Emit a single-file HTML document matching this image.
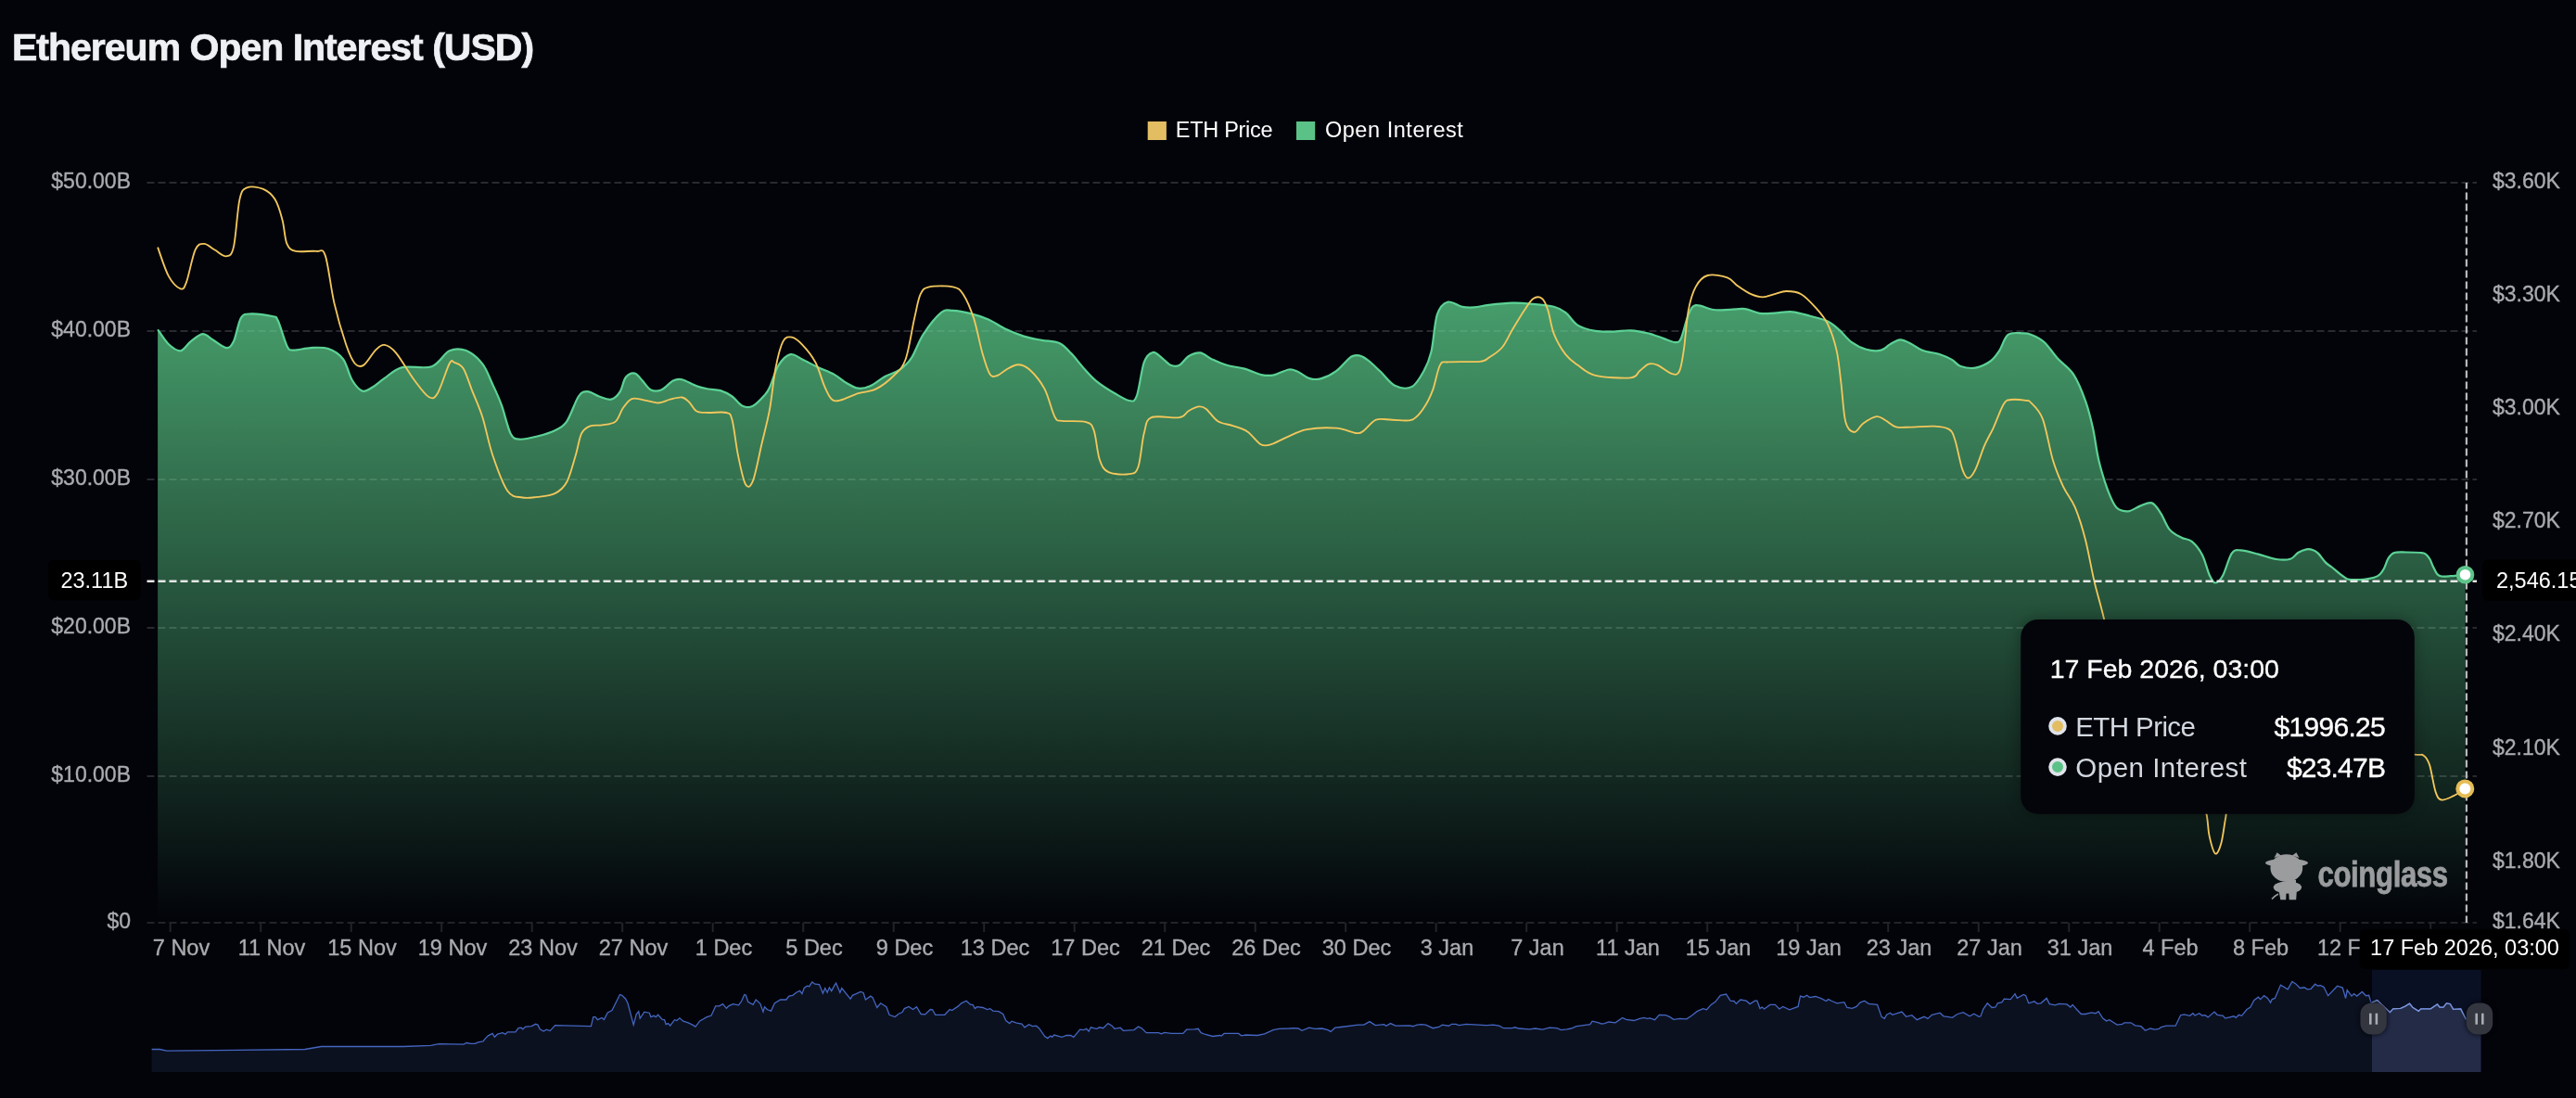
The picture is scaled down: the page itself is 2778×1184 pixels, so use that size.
<!DOCTYPE html>
<html><head><meta charset="utf-8"><style>
html,body{margin:0;padding:0;background:#03040a;}
body{width:2778px;height:1184px;position:relative;overflow:hidden;font-family:'Liberation Sans', sans-serif;}
</style></head><body>
<svg width="2778" height="1184" viewBox="0 0 2778 1184" style="position:absolute;left:0;top:0;will-change:transform"><defs><linearGradient id="g1" x1="0" y1="325" x2="0" y2="995" gradientUnits="userSpaceOnUse"><stop offset="0" stop-color="#58c484" stop-opacity="0.80"/><stop offset="1" stop-color="#58c484" stop-opacity="0.0"/></linearGradient><clipPath id="selclip"><rect x="2558" y="1046" width="117.6" height="110"/></clipPath><filter id="sh" x="-20%" y="-20%" width="140%" height="140%"><feGaussianBlur stdDeviation="8"/></filter><filter id="hs" x="-50%" y="-50%" width="200%" height="200%"><feGaussianBlur stdDeviation="2.5"/></filter></defs><text x="13" y="64.7" font-family="'Liberation Sans', sans-serif" font-weight="700" font-size="41" letter-spacing="-1.0" fill="#eef0f4" stroke="#eef0f4" stroke-width="0.7">Ethereum Open Interest (USD)</text><rect x="1237.7" y="131" width="20.2" height="20" fill="#e2bd62"/><text x="1267.8" y="147.8" font-family="'Liberation Sans', sans-serif" font-size="23.5" letter-spacing="-0.3" fill="#ffffff">ETH Price</text><rect x="1398" y="131" width="20.2" height="20" fill="#5bc287"/><text x="1428.9" y="147.8" font-family="'Liberation Sans', sans-serif" font-size="23.5" letter-spacing="0.55" fill="#ffffff">Open Interest</text><line x1="158.5" y1="994.9" x2="2671" y2="994.9" stroke="#222328" stroke-width="2" stroke-dasharray="8 4"/><line x1="158.5" y1="836.9" x2="2671" y2="836.9" stroke="#222328" stroke-width="2" stroke-dasharray="8 4"/><line x1="158.5" y1="676.9" x2="2671" y2="676.9" stroke="#222328" stroke-width="2" stroke-dasharray="8 4"/><line x1="158.5" y1="516.9" x2="2671" y2="516.9" stroke="#222328" stroke-width="2" stroke-dasharray="8 4"/><line x1="158.5" y1="356.9" x2="2671" y2="356.9" stroke="#222328" stroke-width="2" stroke-dasharray="8 4"/><line x1="158.5" y1="196.9" x2="2671" y2="196.9" stroke="#222328" stroke-width="2" stroke-dasharray="8 4"/><line x1="183.7" y1="995" x2="183.7" y2="1005" stroke="#222327" stroke-width="2"/><line x1="281.2" y1="995" x2="281.2" y2="1005" stroke="#222327" stroke-width="2"/><line x1="378.7" y1="995" x2="378.7" y2="1005" stroke="#222327" stroke-width="2"/><line x1="476.2" y1="995" x2="476.2" y2="1005" stroke="#222327" stroke-width="2"/><line x1="573.7" y1="995" x2="573.7" y2="1005" stroke="#222327" stroke-width="2"/><line x1="671.2" y1="995" x2="671.2" y2="1005" stroke="#222327" stroke-width="2"/><line x1="768.7" y1="995" x2="768.7" y2="1005" stroke="#222327" stroke-width="2"/><line x1="866.2" y1="995" x2="866.2" y2="1005" stroke="#222327" stroke-width="2"/><line x1="963.7" y1="995" x2="963.7" y2="1005" stroke="#222327" stroke-width="2"/><line x1="1061.2" y1="995" x2="1061.2" y2="1005" stroke="#222327" stroke-width="2"/><line x1="1158.7" y1="995" x2="1158.7" y2="1005" stroke="#222327" stroke-width="2"/><line x1="1256.2" y1="995" x2="1256.2" y2="1005" stroke="#222327" stroke-width="2"/><line x1="1353.7" y1="995" x2="1353.7" y2="1005" stroke="#222327" stroke-width="2"/><line x1="1451.2" y1="995" x2="1451.2" y2="1005" stroke="#222327" stroke-width="2"/><line x1="1548.7" y1="995" x2="1548.7" y2="1005" stroke="#222327" stroke-width="2"/><line x1="1646.2" y1="995" x2="1646.2" y2="1005" stroke="#222327" stroke-width="2"/><line x1="1743.7" y1="995" x2="1743.7" y2="1005" stroke="#222327" stroke-width="2"/><line x1="1841.2" y1="995" x2="1841.2" y2="1005" stroke="#222327" stroke-width="2"/><line x1="1938.7" y1="995" x2="1938.7" y2="1005" stroke="#222327" stroke-width="2"/><line x1="2036.2" y1="995" x2="2036.2" y2="1005" stroke="#222327" stroke-width="2"/><line x1="2133.7" y1="995" x2="2133.7" y2="1005" stroke="#222327" stroke-width="2"/><line x1="2231.2" y1="995" x2="2231.2" y2="1005" stroke="#222327" stroke-width="2"/><line x1="2328.7" y1="995" x2="2328.7" y2="1005" stroke="#222327" stroke-width="2"/><line x1="2426.2" y1="995" x2="2426.2" y2="1005" stroke="#222327" stroke-width="2"/><line x1="2523.7" y1="995" x2="2523.7" y2="1005" stroke="#222327" stroke-width="2"/><line x1="2621.2" y1="995" x2="2621.2" y2="1005" stroke="#222327" stroke-width="2"/><path d="M170.1,355.3 C172.1,358.0 177.8,367.5 181.9,371.3 C186.0,375.1 190.6,378.8 194.6,378.3 C198.6,377.8 201.8,371.1 205.8,368.1 C209.8,365.1 214.5,360.4 218.5,360.1 C222.5,359.8 225.4,364.0 229.7,366.5 C233.9,369.0 240.3,374.8 244.0,375.1 C247.7,375.4 249.3,373.5 252.0,368.1 C254.7,362.7 256.8,347.6 260.0,342.6 C263.2,337.7 265.5,338.7 271.1,338.4 C276.7,338.1 288.7,339.8 293.5,341.0 C298.3,342.2 297.2,340.5 299.8,345.8 C302.4,351.1 306.7,367.6 309.4,372.9 C312.1,378.2 311.6,377.2 315.8,377.6 C320.1,378.0 328.5,375.4 334.9,375.1 C341.3,374.8 348.1,374.0 354.0,376.0 C359.9,378.0 365.8,381.6 370.0,387.2 C374.2,392.8 376.1,403.8 379.5,409.5 C382.9,415.2 387.0,420.3 390.7,421.6 C394.4,422.9 397.8,419.8 401.8,417.5 C405.8,415.2 409.3,411.5 414.6,407.9 C419.9,404.3 425.2,398.2 433.7,396.1 C442.2,394.0 457.1,398.2 465.6,395.2 C474.1,392.2 478.5,381.1 484.7,378.3 C490.9,375.5 496.9,375.8 502.8,378.1 C508.7,380.5 515.5,386.3 520.3,392.4 C525.1,398.5 527.9,407.4 531.4,414.8 C534.9,422.2 537.8,428.3 541.0,437.1 C544.2,445.9 547.4,461.3 550.6,467.4 C553.8,473.5 555.3,473.2 560.1,473.7 C564.9,474.2 572.9,472.1 579.3,470.5 C585.7,468.9 593.1,466.8 598.4,464.2 C603.7,461.6 606.9,460.7 611.1,454.6 C615.4,448.5 620.2,432.9 623.9,427.5 C627.6,422.1 629.8,422.1 633.5,422.1 C637.2,422.1 642.0,426.1 646.2,427.5 C650.5,428.9 655.3,431.5 659.0,430.7 C662.7,429.9 665.9,426.7 668.5,422.7 C671.1,418.7 672.2,410.1 674.9,406.8 C677.6,403.5 681.6,402.1 684.5,402.6 C687.4,403.1 689.5,407.0 692.4,410.0 C695.3,413.0 698.5,418.8 702.0,420.5 C705.5,422.2 709.1,422.1 713.1,420.5 C717.1,418.9 722.2,412.5 725.9,410.6 C729.6,408.7 731.2,408.3 735.5,409.3 C739.8,410.3 746.6,414.7 751.4,416.4 C756.2,418.1 759.9,418.7 764.1,419.5 C768.4,420.3 772.6,419.8 776.9,421.1 C781.1,422.4 785.6,424.7 789.6,427.5 C793.6,430.3 797.1,436.0 800.8,437.7 C804.5,439.4 808.0,439.7 812.0,437.7 C816.0,435.7 821.7,429.2 824.7,425.9 C827.7,422.6 827.5,423.1 830.0,417.8 C832.5,412.5 835.9,399.8 839.6,393.9 C843.3,387.9 848.0,383.2 852.3,382.1 C856.5,381.0 860.3,385.3 865.1,387.5 C869.9,389.7 875.2,392.7 881.0,395.5 C886.8,398.3 894.8,401.2 900.1,404.1 C905.4,407.0 908.6,410.6 912.9,413.0 C917.1,415.4 921.4,418.2 925.6,418.7 C929.9,419.2 933.6,418.3 938.4,416.2 C943.2,414.1 949.0,408.9 954.3,406.0 C959.6,403.1 965.5,402.1 970.3,398.7 C975.1,395.3 978.8,392.3 983.0,385.9 C987.2,379.5 990.5,368.5 995.8,360.4 C1001.1,352.3 1009.6,341.4 1014.9,337.1 C1020.2,332.9 1022.3,334.7 1027.6,334.9 C1032.9,335.1 1040.4,336.5 1046.8,338.1 C1053.2,339.7 1059.5,341.7 1065.9,344.5 C1072.3,347.3 1078.6,352.0 1085.0,355.0 C1091.4,358.0 1097.7,360.6 1104.1,362.6 C1110.5,364.6 1116.9,365.6 1123.3,366.8 C1129.7,368.0 1137.1,367.6 1142.4,370.0 C1147.7,372.4 1150.6,376.4 1155.2,381.1 C1159.8,385.9 1165.4,393.5 1170.0,398.5 C1174.6,403.5 1177.5,407.1 1182.8,411.3 C1188.1,415.6 1196.1,420.6 1201.9,424.0 C1207.7,427.4 1213.8,431.5 1217.8,432.0 C1221.8,432.5 1223.1,434.1 1225.8,427.2 C1228.5,420.3 1230.9,398.5 1233.8,390.6 C1236.7,382.7 1240.1,380.8 1243.3,380.0 C1246.5,379.2 1249.7,383.5 1252.9,385.8 C1256.1,388.1 1259.2,392.5 1262.4,393.8 C1265.6,395.1 1268.8,395.4 1272.0,393.8 C1275.2,392.2 1277.9,386.4 1281.6,384.2 C1285.3,382.0 1290.0,379.9 1294.3,380.4 C1298.5,380.9 1302.3,385.2 1307.1,387.4 C1311.9,389.6 1317.2,392.1 1323.0,393.8 C1328.8,395.5 1335.7,395.9 1342.1,397.6 C1348.5,399.4 1356.0,403.2 1361.3,404.3 C1366.6,405.4 1369.2,405.3 1374.0,404.3 C1378.8,403.3 1385.8,399.1 1390.0,398.5 C1394.2,397.9 1395.8,399.2 1399.5,400.8 C1403.2,402.4 1408.0,406.9 1412.3,408.1 C1416.5,409.3 1420.2,409.4 1425.0,408.1 C1429.8,406.8 1435.7,404.0 1441.0,400.1 C1446.3,396.2 1452.7,387.6 1456.9,384.8 C1461.2,382.1 1463.3,382.9 1466.5,383.6 C1469.7,384.3 1472.3,386.1 1476.0,389.0 C1479.7,391.9 1484.0,396.3 1488.8,400.8 C1493.6,405.3 1499.0,413.4 1504.7,416.1 C1510.4,418.8 1517.7,419.6 1522.8,416.9 C1527.9,414.2 1532.0,406.3 1535.5,400.0 C1539.0,393.7 1541.1,389.4 1543.5,379.3 C1545.9,369.2 1546.9,348.3 1549.8,339.4 C1552.7,330.5 1556.5,327.1 1561.0,325.7 C1565.5,324.3 1572.1,329.9 1576.9,330.8 C1581.7,331.8 1584.9,331.7 1589.7,331.4 C1594.5,331.1 1598.7,329.7 1605.6,328.9 C1612.5,328.1 1623.6,326.9 1631.1,326.7 C1638.5,326.5 1642.8,326.9 1650.3,327.6 C1657.8,328.3 1669.4,329.2 1675.8,330.8 C1682.2,332.4 1684.2,333.9 1688.5,337.2 C1692.8,340.5 1696.0,347.3 1701.3,350.6 C1706.6,353.9 1714.0,355.7 1720.4,356.9 C1726.8,358.1 1733.1,357.7 1739.5,357.6 C1745.9,357.5 1752.2,356.0 1758.6,356.3 C1765.0,356.6 1771.9,358.1 1777.8,359.5 C1783.7,360.9 1788.9,363.3 1793.7,364.9 C1798.5,366.5 1803.3,369.1 1806.5,369.1 C1809.7,369.1 1810.4,369.8 1812.8,364.9 C1815.2,359.9 1818.1,345.3 1820.8,339.4 C1823.5,333.4 1824.3,330.1 1828.8,329.2 C1833.3,328.3 1841.7,333.2 1847.9,334.0 C1854.1,334.8 1860.2,333.9 1865.9,333.8 C1871.6,333.7 1876.6,332.4 1881.9,333.1 C1887.2,333.8 1892.5,337.1 1897.8,337.9 C1903.1,338.6 1907.9,337.9 1913.8,337.6 C1919.7,337.3 1926.5,335.8 1932.9,336.3 C1939.3,336.8 1945.6,339.1 1952.0,340.8 C1958.4,342.5 1965.8,343.9 1971.1,346.5 C1976.4,349.1 1979.7,352.4 1983.9,356.1 C1988.2,359.8 1991.8,365.4 1996.6,368.8 C2001.4,372.2 2007.3,375.3 2012.6,376.8 C2017.9,378.3 2024.2,378.6 2028.5,377.7 C2032.8,376.8 2034.6,373.3 2038.1,371.4 C2041.5,369.5 2045.5,366.5 2049.2,366.3 C2052.9,366.1 2056.4,368.5 2060.4,370.4 C2064.4,372.3 2067.8,375.7 2073.1,377.7 C2078.4,379.7 2087.0,380.5 2092.3,382.2 C2097.6,383.9 2101.3,385.8 2105.0,387.9 C2108.7,390.0 2110.3,393.6 2114.6,395.0 C2118.8,396.4 2125.2,397.5 2130.5,396.6 C2135.8,395.7 2142.2,392.5 2146.5,389.5 C2150.8,386.5 2152.8,383.2 2156.0,378.4 C2159.2,373.6 2161.3,364.1 2165.6,360.9 C2169.8,357.7 2177.4,359.3 2181.5,359.3 C2185.6,359.3 2186.2,359.1 2190.0,360.7 C2193.8,362.3 2199.5,364.4 2204.3,368.7 C2209.1,372.9 2213.4,380.3 2218.7,386.2 C2224.0,392.1 2231.1,396.1 2236.2,403.8 C2241.2,411.5 2245.6,422.8 2249.0,432.4 C2252.4,441.9 2254.5,450.5 2256.9,461.1 C2259.3,471.7 2260.6,485.0 2263.3,496.2 C2266.0,507.4 2269.7,519.6 2272.9,528.1 C2276.1,536.6 2278.7,543.3 2282.4,547.2 C2286.1,551.1 2290.9,551.6 2295.2,551.3 C2299.4,551.0 2303.7,547.1 2307.9,545.6 C2312.2,544.1 2317.0,541.1 2320.7,542.4 C2324.4,543.7 2327.1,548.8 2330.3,553.6 C2333.5,558.4 2336.1,566.8 2339.8,571.1 C2343.5,575.5 2348.6,577.6 2352.6,579.7 C2356.6,581.8 2360.0,580.8 2363.7,583.9 C2367.4,587.0 2371.7,592.1 2374.9,598.2 C2378.1,604.3 2380.5,615.5 2382.9,620.5 C2385.3,625.5 2386.8,628.5 2389.2,628.5 C2391.6,628.5 2394.3,625.8 2397.2,620.5 C2400.1,615.2 2403.6,601.1 2406.8,596.6 C2410.0,592.1 2411.5,593.2 2416.3,593.4 C2421.1,593.6 2429.1,596.0 2435.5,597.6 C2441.9,599.2 2448.8,602.1 2454.6,603.0 C2460.3,603.9 2466.1,604.0 2470.0,602.8 C2473.9,601.6 2475.3,597.8 2478.2,596.0 C2481.1,594.2 2484.6,592.8 2487.3,592.3 C2490.0,591.8 2492.5,592.4 2494.6,593.2 C2496.7,594.0 2497.8,594.6 2500.1,596.9 C2502.4,599.2 2505.9,604.5 2508.3,606.9 C2510.7,609.3 2512.0,609.5 2514.6,611.5 C2517.2,613.5 2521.1,617.1 2523.8,619.2 C2526.5,621.3 2528.7,623.2 2531.0,624.2 C2533.3,625.2 2534.3,625.0 2537.4,625.1 C2540.5,625.2 2545.5,625.2 2549.3,624.8 C2553.1,624.4 2557.3,623.7 2560.2,622.8 C2563.1,621.9 2564.8,620.9 2566.6,619.2 C2568.4,617.5 2569.6,615.7 2571.1,612.8 C2572.6,609.9 2573.9,604.7 2575.7,601.9 C2577.5,599.1 2578.8,597.1 2582.0,596.0 C2585.2,594.9 2590.1,595.5 2594.8,595.5 C2599.5,595.5 2606.8,595.7 2610.3,596.0 C2613.8,596.3 2614.0,596.2 2615.7,597.3 C2617.4,598.4 2618.9,600.5 2620.3,602.8 C2621.7,605.1 2622.5,608.3 2623.9,611.0 C2625.3,613.7 2627.0,617.5 2628.5,619.2 C2630.0,621.0 2630.7,621.2 2633.0,621.5 C2635.3,621.8 2639.5,621.4 2642.2,621.2 C2644.9,621.1 2646.7,620.9 2649.4,620.6 C2652.1,620.4 2657.0,619.9 2658.5,619.7 L2658.5,995.0 L170.1,995.0 Z" fill="url(#g1)"/><line x1="158.5" y1="836.9" x2="2671" y2="836.9" stroke="#ffffff" stroke-opacity="0.035" stroke-width="2" stroke-dasharray="8 4"/><line x1="158.5" y1="676.9" x2="2671" y2="676.9" stroke="#ffffff" stroke-opacity="0.035" stroke-width="2" stroke-dasharray="8 4"/><line x1="158.5" y1="516.9" x2="2671" y2="516.9" stroke="#ffffff" stroke-opacity="0.035" stroke-width="2" stroke-dasharray="8 4"/><line x1="158.5" y1="356.9" x2="2671" y2="356.9" stroke="#ffffff" stroke-opacity="0.035" stroke-width="2" stroke-dasharray="8 4"/><line x1="158.5" y1="196.9" x2="2671" y2="196.9" stroke="#ffffff" stroke-opacity="0.035" stroke-width="2" stroke-dasharray="8 4"/><path d="M170.1,355.3 C172.1,358.0 177.8,367.5 181.9,371.3 C186.0,375.1 190.6,378.8 194.6,378.3 C198.6,377.8 201.8,371.1 205.8,368.1 C209.8,365.1 214.5,360.4 218.5,360.1 C222.5,359.8 225.4,364.0 229.7,366.5 C233.9,369.0 240.3,374.8 244.0,375.1 C247.7,375.4 249.3,373.5 252.0,368.1 C254.7,362.7 256.8,347.6 260.0,342.6 C263.2,337.7 265.5,338.7 271.1,338.4 C276.7,338.1 288.7,339.8 293.5,341.0 C298.3,342.2 297.2,340.5 299.8,345.8 C302.4,351.1 306.7,367.6 309.4,372.9 C312.1,378.2 311.6,377.2 315.8,377.6 C320.1,378.0 328.5,375.4 334.9,375.1 C341.3,374.8 348.1,374.0 354.0,376.0 C359.9,378.0 365.8,381.6 370.0,387.2 C374.2,392.8 376.1,403.8 379.5,409.5 C382.9,415.2 387.0,420.3 390.7,421.6 C394.4,422.9 397.8,419.8 401.8,417.5 C405.8,415.2 409.3,411.5 414.6,407.9 C419.9,404.3 425.2,398.2 433.7,396.1 C442.2,394.0 457.1,398.2 465.6,395.2 C474.1,392.2 478.5,381.1 484.7,378.3 C490.9,375.5 496.9,375.8 502.8,378.1 C508.7,380.5 515.5,386.3 520.3,392.4 C525.1,398.5 527.9,407.4 531.4,414.8 C534.9,422.2 537.8,428.3 541.0,437.1 C544.2,445.9 547.4,461.3 550.6,467.4 C553.8,473.5 555.3,473.2 560.1,473.7 C564.9,474.2 572.9,472.1 579.3,470.5 C585.7,468.9 593.1,466.8 598.4,464.2 C603.7,461.6 606.9,460.7 611.1,454.6 C615.4,448.5 620.2,432.9 623.9,427.5 C627.6,422.1 629.8,422.1 633.5,422.1 C637.2,422.1 642.0,426.1 646.2,427.5 C650.5,428.9 655.3,431.5 659.0,430.7 C662.7,429.9 665.9,426.7 668.5,422.7 C671.1,418.7 672.2,410.1 674.9,406.8 C677.6,403.5 681.6,402.1 684.5,402.6 C687.4,403.1 689.5,407.0 692.4,410.0 C695.3,413.0 698.5,418.8 702.0,420.5 C705.5,422.2 709.1,422.1 713.1,420.5 C717.1,418.9 722.2,412.5 725.9,410.6 C729.6,408.7 731.2,408.3 735.5,409.3 C739.8,410.3 746.6,414.7 751.4,416.4 C756.2,418.1 759.9,418.7 764.1,419.5 C768.4,420.3 772.6,419.8 776.9,421.1 C781.1,422.4 785.6,424.7 789.6,427.5 C793.6,430.3 797.1,436.0 800.8,437.7 C804.5,439.4 808.0,439.7 812.0,437.7 C816.0,435.7 821.7,429.2 824.7,425.9 C827.7,422.6 827.5,423.1 830.0,417.8 C832.5,412.5 835.9,399.8 839.6,393.9 C843.3,387.9 848.0,383.2 852.3,382.1 C856.5,381.0 860.3,385.3 865.1,387.5 C869.9,389.7 875.2,392.7 881.0,395.5 C886.8,398.3 894.8,401.2 900.1,404.1 C905.4,407.0 908.6,410.6 912.9,413.0 C917.1,415.4 921.4,418.2 925.6,418.7 C929.9,419.2 933.6,418.3 938.4,416.2 C943.2,414.1 949.0,408.9 954.3,406.0 C959.6,403.1 965.5,402.1 970.3,398.7 C975.1,395.3 978.8,392.3 983.0,385.9 C987.2,379.5 990.5,368.5 995.8,360.4 C1001.1,352.3 1009.6,341.4 1014.9,337.1 C1020.2,332.9 1022.3,334.7 1027.6,334.9 C1032.9,335.1 1040.4,336.5 1046.8,338.1 C1053.2,339.7 1059.5,341.7 1065.9,344.5 C1072.3,347.3 1078.6,352.0 1085.0,355.0 C1091.4,358.0 1097.7,360.6 1104.1,362.6 C1110.5,364.6 1116.9,365.6 1123.3,366.8 C1129.7,368.0 1137.1,367.6 1142.4,370.0 C1147.7,372.4 1150.6,376.4 1155.2,381.1 C1159.8,385.9 1165.4,393.5 1170.0,398.5 C1174.6,403.5 1177.5,407.1 1182.8,411.3 C1188.1,415.6 1196.1,420.6 1201.9,424.0 C1207.7,427.4 1213.8,431.5 1217.8,432.0 C1221.8,432.5 1223.1,434.1 1225.8,427.2 C1228.5,420.3 1230.9,398.5 1233.8,390.6 C1236.7,382.7 1240.1,380.8 1243.3,380.0 C1246.5,379.2 1249.7,383.5 1252.9,385.8 C1256.1,388.1 1259.2,392.5 1262.4,393.8 C1265.6,395.1 1268.8,395.4 1272.0,393.8 C1275.2,392.2 1277.9,386.4 1281.6,384.2 C1285.3,382.0 1290.0,379.9 1294.3,380.4 C1298.5,380.9 1302.3,385.2 1307.1,387.4 C1311.9,389.6 1317.2,392.1 1323.0,393.8 C1328.8,395.5 1335.7,395.9 1342.1,397.6 C1348.5,399.4 1356.0,403.2 1361.3,404.3 C1366.6,405.4 1369.2,405.3 1374.0,404.3 C1378.8,403.3 1385.8,399.1 1390.0,398.5 C1394.2,397.9 1395.8,399.2 1399.5,400.8 C1403.2,402.4 1408.0,406.9 1412.3,408.1 C1416.5,409.3 1420.2,409.4 1425.0,408.1 C1429.8,406.8 1435.7,404.0 1441.0,400.1 C1446.3,396.2 1452.7,387.6 1456.9,384.8 C1461.2,382.1 1463.3,382.9 1466.5,383.6 C1469.7,384.3 1472.3,386.1 1476.0,389.0 C1479.7,391.9 1484.0,396.3 1488.8,400.8 C1493.6,405.3 1499.0,413.4 1504.7,416.1 C1510.4,418.8 1517.7,419.6 1522.8,416.9 C1527.9,414.2 1532.0,406.3 1535.5,400.0 C1539.0,393.7 1541.1,389.4 1543.5,379.3 C1545.9,369.2 1546.9,348.3 1549.8,339.4 C1552.7,330.5 1556.5,327.1 1561.0,325.7 C1565.5,324.3 1572.1,329.9 1576.9,330.8 C1581.7,331.8 1584.9,331.7 1589.7,331.4 C1594.5,331.1 1598.7,329.7 1605.6,328.9 C1612.5,328.1 1623.6,326.9 1631.1,326.7 C1638.5,326.5 1642.8,326.9 1650.3,327.6 C1657.8,328.3 1669.4,329.2 1675.8,330.8 C1682.2,332.4 1684.2,333.9 1688.5,337.2 C1692.8,340.5 1696.0,347.3 1701.3,350.6 C1706.6,353.9 1714.0,355.7 1720.4,356.9 C1726.8,358.1 1733.1,357.7 1739.5,357.6 C1745.9,357.5 1752.2,356.0 1758.6,356.3 C1765.0,356.6 1771.9,358.1 1777.8,359.5 C1783.7,360.9 1788.9,363.3 1793.7,364.9 C1798.5,366.5 1803.3,369.1 1806.5,369.1 C1809.7,369.1 1810.4,369.8 1812.8,364.9 C1815.2,359.9 1818.1,345.3 1820.8,339.4 C1823.5,333.4 1824.3,330.1 1828.8,329.2 C1833.3,328.3 1841.7,333.2 1847.9,334.0 C1854.1,334.8 1860.2,333.9 1865.9,333.8 C1871.6,333.7 1876.6,332.4 1881.9,333.1 C1887.2,333.8 1892.5,337.1 1897.8,337.9 C1903.1,338.6 1907.9,337.9 1913.8,337.6 C1919.7,337.3 1926.5,335.8 1932.9,336.3 C1939.3,336.8 1945.6,339.1 1952.0,340.8 C1958.4,342.5 1965.8,343.9 1971.1,346.5 C1976.4,349.1 1979.7,352.4 1983.9,356.1 C1988.2,359.8 1991.8,365.4 1996.6,368.8 C2001.4,372.2 2007.3,375.3 2012.6,376.8 C2017.9,378.3 2024.2,378.6 2028.5,377.7 C2032.8,376.8 2034.6,373.3 2038.1,371.4 C2041.5,369.5 2045.5,366.5 2049.2,366.3 C2052.9,366.1 2056.4,368.5 2060.4,370.4 C2064.4,372.3 2067.8,375.7 2073.1,377.7 C2078.4,379.7 2087.0,380.5 2092.3,382.2 C2097.6,383.9 2101.3,385.8 2105.0,387.9 C2108.7,390.0 2110.3,393.6 2114.6,395.0 C2118.8,396.4 2125.2,397.5 2130.5,396.6 C2135.8,395.7 2142.2,392.5 2146.5,389.5 C2150.8,386.5 2152.8,383.2 2156.0,378.4 C2159.2,373.6 2161.3,364.1 2165.6,360.9 C2169.8,357.7 2177.4,359.3 2181.5,359.3 C2185.6,359.3 2186.2,359.1 2190.0,360.7 C2193.8,362.3 2199.5,364.4 2204.3,368.7 C2209.1,372.9 2213.4,380.3 2218.7,386.2 C2224.0,392.1 2231.1,396.1 2236.2,403.8 C2241.2,411.5 2245.6,422.8 2249.0,432.4 C2252.4,441.9 2254.5,450.5 2256.9,461.1 C2259.3,471.7 2260.6,485.0 2263.3,496.2 C2266.0,507.4 2269.7,519.6 2272.9,528.1 C2276.1,536.6 2278.7,543.3 2282.4,547.2 C2286.1,551.1 2290.9,551.6 2295.2,551.3 C2299.4,551.0 2303.7,547.1 2307.9,545.6 C2312.2,544.1 2317.0,541.1 2320.7,542.4 C2324.4,543.7 2327.1,548.8 2330.3,553.6 C2333.5,558.4 2336.1,566.8 2339.8,571.1 C2343.5,575.5 2348.6,577.6 2352.6,579.7 C2356.6,581.8 2360.0,580.8 2363.7,583.9 C2367.4,587.0 2371.7,592.1 2374.9,598.2 C2378.1,604.3 2380.5,615.5 2382.9,620.5 C2385.3,625.5 2386.8,628.5 2389.2,628.5 C2391.6,628.5 2394.3,625.8 2397.2,620.5 C2400.1,615.2 2403.6,601.1 2406.8,596.6 C2410.0,592.1 2411.5,593.2 2416.3,593.4 C2421.1,593.6 2429.1,596.0 2435.5,597.6 C2441.9,599.2 2448.8,602.1 2454.6,603.0 C2460.3,603.9 2466.1,604.0 2470.0,602.8 C2473.9,601.6 2475.3,597.8 2478.2,596.0 C2481.1,594.2 2484.6,592.8 2487.3,592.3 C2490.0,591.8 2492.5,592.4 2494.6,593.2 C2496.7,594.0 2497.8,594.6 2500.1,596.9 C2502.4,599.2 2505.9,604.5 2508.3,606.9 C2510.7,609.3 2512.0,609.5 2514.6,611.5 C2517.2,613.5 2521.1,617.1 2523.8,619.2 C2526.5,621.3 2528.7,623.2 2531.0,624.2 C2533.3,625.2 2534.3,625.0 2537.4,625.1 C2540.5,625.2 2545.5,625.2 2549.3,624.8 C2553.1,624.4 2557.3,623.7 2560.2,622.8 C2563.1,621.9 2564.8,620.9 2566.6,619.2 C2568.4,617.5 2569.6,615.7 2571.1,612.8 C2572.6,609.9 2573.9,604.7 2575.7,601.9 C2577.5,599.1 2578.8,597.1 2582.0,596.0 C2585.2,594.9 2590.1,595.5 2594.8,595.5 C2599.5,595.5 2606.8,595.7 2610.3,596.0 C2613.8,596.3 2614.0,596.2 2615.7,597.3 C2617.4,598.4 2618.9,600.5 2620.3,602.8 C2621.7,605.1 2622.5,608.3 2623.9,611.0 C2625.3,613.7 2627.0,617.5 2628.5,619.2 C2630.0,621.0 2630.7,621.2 2633.0,621.5 C2635.3,621.8 2639.5,621.4 2642.2,621.2 C2644.9,621.1 2646.7,620.9 2649.4,620.6 C2652.1,620.4 2657.0,619.9 2658.5,619.7" fill="none" stroke="#5cd295" stroke-width="2.2" stroke-linejoin="round"/><path d="M170.1,266.7 C172.1,271.9 177.8,290.5 181.9,297.9 C186.0,305.3 191.4,310.2 194.6,311.3 C197.8,312.4 198.3,311.3 201.0,304.3 C203.7,297.3 207.4,276.2 210.6,269.3 C213.8,262.4 216.6,262.9 220.1,262.9 C223.6,262.9 227.3,267.1 231.3,269.3 C235.3,271.5 240.6,276.8 244.0,276.3 C247.4,275.8 249.6,276.3 252.0,266.1 C254.4,255.9 256.0,225.7 258.4,215.1 C260.8,204.5 262.1,204.2 266.4,202.3 C270.6,200.4 278.9,201.8 283.9,203.9 C288.9,206.0 293.2,209.5 296.6,215.1 C300.1,220.7 302.5,229.4 304.6,237.4 C306.7,245.4 307.0,257.3 309.4,262.9 C311.8,268.5 313.7,269.6 319.0,270.9 C324.3,272.2 336.0,270.1 341.3,270.9 C346.6,271.7 347.6,266.3 350.8,275.6 C354.0,284.9 356.7,310.7 360.4,326.6 C364.1,342.6 369.4,360.4 373.1,371.3 C376.8,382.2 379.5,388.3 382.7,392.0 C385.9,395.7 388.6,396.0 392.3,393.6 C396.0,391.2 401.3,381.2 405.0,377.6 C408.7,374.0 410.9,371.4 414.6,371.9 C418.3,372.4 422.0,374.5 427.3,380.8 C432.6,387.1 440.6,401.6 446.5,409.5 C452.4,417.4 458.1,425.6 462.4,428.0 C466.6,430.4 468.3,429.9 472.0,423.9 C475.7,417.9 481.7,397.5 484.7,392.0 C487.7,386.5 487.5,390.0 490.0,390.9 C492.5,391.8 496.4,392.2 499.6,397.2 C502.8,402.2 505.7,412.3 509.1,421.1 C512.5,429.9 516.6,438.1 520.3,449.8 C524.0,461.5 526.9,478.0 531.4,491.3 C535.9,504.6 542.1,522.0 547.4,529.5 C552.7,537.0 558.0,535.4 563.3,536.5 C568.6,537.6 573.4,536.6 579.3,535.9 C585.1,535.2 593.1,534.8 598.4,532.1 C603.7,529.5 607.4,526.8 611.1,520.0 C614.8,513.2 618.0,500.1 620.7,491.3 C623.4,482.5 624.5,472.7 627.1,467.4 C629.8,462.1 632.9,460.9 636.6,459.4 C640.3,457.9 644.9,459.2 649.4,458.4 C653.9,457.6 660.0,457.6 663.7,454.6 C667.4,451.6 668.8,444.4 671.7,440.3 C674.6,436.2 677.6,431.6 681.3,430.1 C685.0,428.6 689.2,430.6 694.0,431.3 C698.8,432.0 705.2,434.6 710.0,434.5 C714.8,434.4 718.5,431.7 722.7,430.7 C727.0,429.7 732.0,428.0 735.5,428.5 C739.0,429.0 740.8,431.4 743.4,433.9 C746.0,436.4 747.9,441.6 751.4,443.5 C754.9,445.4 758.8,444.8 764.1,445.0 C769.4,445.2 779.0,443.7 783.3,445.0 C787.5,446.3 787.5,445.3 789.6,453.0 C791.7,460.7 793.6,479.8 796.0,491.3 C798.4,502.8 801.3,517.7 804.0,522.2 C806.7,526.7 809.1,525.7 812.0,518.4 C814.9,511.1 818.5,491.3 821.5,478.5 C824.5,465.7 827.5,455.3 830.0,441.7 C832.5,428.1 834.0,409.3 836.4,397.1 C838.8,384.9 841.4,374.0 844.3,368.4 C847.2,362.8 850.4,363.1 853.9,363.6 C857.4,364.1 860.9,367.1 865.1,371.6 C869.4,376.1 875.4,383.3 879.4,390.7 C883.4,398.1 886.1,409.6 889.0,416.2 C891.9,422.8 894.0,427.9 896.9,430.5 C899.8,433.1 901.7,432.6 906.5,431.5 C911.3,430.4 919.2,426.2 925.6,424.2 C932.0,422.2 938.4,422.6 944.8,419.4 C951.2,416.2 958.6,410.3 963.9,405.0 C969.2,399.7 972.9,397.9 976.6,387.5 C980.3,377.1 983.5,354.6 986.2,342.9 C988.9,331.2 990.0,323.0 992.6,317.4 C995.2,311.8 996.3,310.7 1002.1,309.4 C1007.9,308.1 1021.5,308.1 1027.6,309.4 C1033.7,310.7 1035.1,311.8 1038.8,317.4 C1042.5,323.0 1046.5,332.3 1050.0,342.9 C1053.5,353.5 1056.6,371.0 1059.5,381.1 C1062.4,391.2 1064.8,399.5 1067.5,403.5 C1070.2,407.5 1072.6,405.8 1075.5,405.0 C1078.4,404.2 1081.3,400.7 1085.0,398.7 C1088.7,396.7 1093.5,393.2 1097.8,393.2 C1102.0,393.2 1105.7,394.3 1110.5,398.7 C1115.3,403.1 1122.0,410.9 1126.5,419.4 C1131.0,427.9 1134.4,444.0 1137.6,449.7 C1140.8,455.4 1140.0,452.9 1145.6,453.8 C1151.2,454.7 1165.4,453.4 1171.1,455.1 C1176.8,456.8 1177.1,457.1 1179.6,463.9 C1182.1,470.7 1183.2,488.2 1185.9,495.8 C1188.6,503.4 1190.2,506.6 1195.5,509.2 C1200.8,511.8 1212.5,512.0 1217.8,511.1 C1223.1,510.2 1224.7,511.0 1227.4,503.7 C1230.1,496.4 1231.4,476.0 1233.8,467.1 C1236.2,458.2 1235.3,453.0 1241.7,450.2 C1248.1,447.4 1265.3,451.4 1272.0,450.2 C1278.7,449.0 1278.1,445.2 1281.6,443.2 C1285.0,441.2 1289.5,438.8 1292.7,438.4 C1295.9,438.0 1297.2,438.2 1300.7,440.9 C1304.2,443.5 1308.6,451.3 1313.4,454.3 C1318.2,457.3 1324.1,457.2 1329.4,459.1 C1334.7,461.0 1340.2,462.1 1345.3,465.5 C1350.3,468.9 1355.5,476.9 1359.7,479.2 C1364.0,481.5 1366.3,480.4 1370.8,479.2 C1375.3,478.0 1380.4,474.6 1386.8,471.9 C1393.2,469.2 1400.1,464.9 1409.1,463.2 C1418.1,461.5 1432.0,461.0 1441.0,461.7 C1450.0,462.4 1458.3,466.7 1463.3,467.1 C1468.3,467.5 1467.8,466.3 1471.2,463.9 C1474.7,461.5 1479.0,454.6 1484.0,452.7 C1489.0,450.8 1495.0,452.7 1501.5,452.7 C1508.0,452.7 1517.1,454.8 1522.8,452.6 C1528.5,450.5 1531.8,445.1 1535.5,439.8 C1539.2,434.5 1542.2,428.4 1545.1,420.7 C1548.0,413.0 1550.1,398.7 1553.0,393.6 C1555.9,388.6 1555.4,391.0 1562.6,390.4 C1569.8,389.8 1588.9,390.6 1596.1,389.8 C1603.3,389.0 1601.6,388.2 1605.6,385.6 C1609.6,383.1 1615.8,379.6 1620.0,374.5 C1624.2,369.4 1627.1,361.9 1631.1,355.3 C1635.1,348.7 1640.2,340.2 1643.9,334.6 C1647.6,329.0 1650.3,324.0 1653.5,321.9 C1656.7,319.8 1660.3,319.8 1663.0,321.9 C1665.7,324.0 1667.3,328.2 1669.4,334.6 C1671.5,341.0 1672.6,352.1 1675.8,360.1 C1679.0,368.1 1684.2,376.8 1688.5,382.4 C1692.8,388.0 1696.0,389.9 1701.3,393.6 C1706.6,397.3 1710.9,402.5 1720.4,404.8 C1730.0,407.1 1750.6,408.1 1758.6,407.3 C1766.6,406.5 1765.0,402.4 1768.2,400.0 C1771.4,397.6 1774.6,393.7 1777.8,392.6 C1781.0,391.5 1783.0,391.8 1787.3,393.6 C1791.5,395.4 1799.3,402.1 1803.3,403.2 C1807.3,404.3 1809.1,404.5 1811.2,400.0 C1813.3,395.5 1814.4,387.0 1816.0,376.1 C1817.6,365.2 1818.7,345.8 1820.8,334.6 C1822.9,323.4 1825.3,315.4 1828.8,309.1 C1832.2,302.8 1835.8,298.6 1841.5,297.0 C1847.2,295.4 1857.4,297.4 1862.8,299.3 C1868.2,301.2 1869.7,305.3 1873.9,308.3 C1878.2,311.3 1883.8,315.2 1888.3,317.2 C1892.8,319.2 1896.8,320.4 1901.0,320.4 C1905.2,320.4 1909.5,318.3 1913.8,317.2 C1918.0,316.1 1921.7,314.0 1926.5,314.0 C1931.3,314.0 1937.1,314.2 1942.4,317.2 C1947.7,320.2 1953.6,326.8 1958.4,332.2 C1963.2,337.6 1967.4,342.0 1971.1,349.7 C1974.8,357.4 1978.3,367.8 1980.7,378.4 C1983.1,389.0 1983.9,400.8 1985.5,413.5 C1987.1,426.2 1987.9,446.1 1990.3,454.9 C1992.7,463.6 1996.6,465.7 1999.8,466.0 C2003.0,466.3 2005.4,459.3 2009.4,456.5 C2013.4,453.7 2019.7,449.7 2023.7,449.2 C2027.7,448.7 2029.8,451.4 2033.3,453.3 C2036.8,455.2 2040.0,459.1 2044.5,460.3 C2049.0,461.5 2053.5,460.7 2060.4,460.6 C2067.3,460.5 2079.0,459.3 2085.9,459.7 C2092.8,460.1 2098.1,460.5 2101.8,462.9 C2105.5,465.3 2105.8,466.8 2108.2,474.0 C2110.6,481.2 2113.8,499.0 2116.2,505.9 C2118.6,512.8 2120.2,515.5 2122.6,515.5 C2125.0,515.5 2127.6,511.8 2130.5,505.9 C2133.4,500.0 2136.9,487.8 2140.1,480.4 C2143.3,473.0 2146.2,468.7 2149.7,461.3 C2153.1,453.9 2157.6,440.9 2160.8,435.8 C2164.0,430.8 2164.8,431.6 2168.8,431.0 C2172.8,430.4 2181.2,431.4 2184.7,431.9 C2188.2,432.4 2187.0,430.7 2190.0,434.0 C2193.0,437.3 2198.8,441.2 2202.8,451.6 C2206.8,462.0 2210.2,484.0 2213.9,496.2 C2217.6,508.4 2221.1,516.4 2225.1,524.9 C2229.1,533.4 2233.8,537.6 2237.8,547.2 C2241.8,556.8 2245.6,569.0 2249.0,582.3 C2252.4,595.6 2255.2,612.7 2258.5,626.9 C2261.8,641.1 2264.7,648.9 2269.1,667.7 C2273.5,686.6 2278.2,718.0 2285.0,740.0 C2291.8,762.0 2300.0,782.5 2310.0,800.0 C2320.0,817.5 2334.7,835.0 2345.0,845.0 C2355.3,855.0 2366.3,854.6 2372.0,860.0 C2377.7,865.4 2377.6,870.6 2379.4,877.5 C2381.2,884.4 2381.0,894.2 2382.6,901.4 C2384.2,908.6 2386.9,919.2 2389.0,920.5 C2391.1,921.8 2393.5,915.8 2395.3,909.4 C2397.2,903.0 2398.5,890.5 2400.1,882.3 C2401.7,874.1 2400.0,867.9 2405.0,860.0 C2410.0,852.1 2417.5,842.5 2430.0,835.0 C2442.5,827.5 2458.3,819.2 2480.0,815.0 C2501.7,810.8 2539.3,810.2 2560.0,810.0 C2580.7,809.8 2595.2,812.9 2604.1,813.7 C2613.0,814.5 2611.0,812.8 2613.7,814.7 C2616.4,816.6 2618.0,818.4 2620.1,824.9 C2622.2,831.4 2624.4,847.3 2626.5,853.6 C2628.6,859.9 2629.6,861.7 2632.8,862.5 C2636.0,863.3 2641.3,860.4 2645.6,858.4 C2649.8,856.4 2656.2,851.7 2658.3,850.4" fill="none" stroke="#f2c75c" stroke-width="1.85" stroke-linejoin="round"/><text x="141" y="1000.7" text-anchor="end" font-family="'Liberation Sans', sans-serif" font-size="23" fill="#a9abaf" stroke="#a9abaf" stroke-width="0.35">$0</text><text x="141" y="842.7" text-anchor="end" font-family="'Liberation Sans', sans-serif" font-size="23" fill="#a9abaf" stroke="#a9abaf" stroke-width="0.35">$10.00B</text><text x="141" y="682.7" text-anchor="end" font-family="'Liberation Sans', sans-serif" font-size="23" fill="#a9abaf" stroke="#a9abaf" stroke-width="0.35">$20.00B</text><text x="141" y="522.7" text-anchor="end" font-family="'Liberation Sans', sans-serif" font-size="23" fill="#a9abaf" stroke="#a9abaf" stroke-width="0.35">$30.00B</text><text x="141" y="362.7" text-anchor="end" font-family="'Liberation Sans', sans-serif" font-size="23" fill="#a9abaf" stroke="#a9abaf" stroke-width="0.35">$40.00B</text><text x="141" y="202.7" text-anchor="end" font-family="'Liberation Sans', sans-serif" font-size="23" fill="#a9abaf" stroke="#a9abaf" stroke-width="0.35">$50.00B</text><text x="2688" y="202.8" font-family="'Liberation Sans', sans-serif" font-size="23" fill="#a9abaf" stroke="#a9abaf" stroke-width="0.35">$3.60K</text><text x="2688" y="324.9" font-family="'Liberation Sans', sans-serif" font-size="23" fill="#a9abaf" stroke="#a9abaf" stroke-width="0.35">$3.30K</text><text x="2688" y="447.1" font-family="'Liberation Sans', sans-serif" font-size="23" fill="#a9abaf" stroke="#a9abaf" stroke-width="0.35">$3.00K</text><text x="2688" y="569.2" font-family="'Liberation Sans', sans-serif" font-size="23" fill="#a9abaf" stroke="#a9abaf" stroke-width="0.35">$2.70K</text><text x="2688" y="691.4" font-family="'Liberation Sans', sans-serif" font-size="23" fill="#a9abaf" stroke="#a9abaf" stroke-width="0.35">$2.40K</text><text x="2688" y="813.5" font-family="'Liberation Sans', sans-serif" font-size="23" fill="#a9abaf" stroke="#a9abaf" stroke-width="0.35">$2.10K</text><text x="2688" y="935.7" font-family="'Liberation Sans', sans-serif" font-size="23" fill="#a9abaf" stroke="#a9abaf" stroke-width="0.35">$1.80K</text><text x="2688" y="1000.8" font-family="'Liberation Sans', sans-serif" font-size="23" fill="#a9abaf" stroke="#a9abaf" stroke-width="0.35">$1.64K</text><text x="195.5" y="1030" text-anchor="middle" font-family="'Liberation Sans', sans-serif" font-size="23.5" fill="#a9abaf" stroke="#a9abaf" stroke-width="0.35">7 Nov</text><text x="293.0" y="1030" text-anchor="middle" font-family="'Liberation Sans', sans-serif" font-size="23.5" fill="#a9abaf" stroke="#a9abaf" stroke-width="0.35">11 Nov</text><text x="390.5" y="1030" text-anchor="middle" font-family="'Liberation Sans', sans-serif" font-size="23.5" fill="#a9abaf" stroke="#a9abaf" stroke-width="0.35">15 Nov</text><text x="488.0" y="1030" text-anchor="middle" font-family="'Liberation Sans', sans-serif" font-size="23.5" fill="#a9abaf" stroke="#a9abaf" stroke-width="0.35">19 Nov</text><text x="585.5" y="1030" text-anchor="middle" font-family="'Liberation Sans', sans-serif" font-size="23.5" fill="#a9abaf" stroke="#a9abaf" stroke-width="0.35">23 Nov</text><text x="683.0" y="1030" text-anchor="middle" font-family="'Liberation Sans', sans-serif" font-size="23.5" fill="#a9abaf" stroke="#a9abaf" stroke-width="0.35">27 Nov</text><text x="780.5" y="1030" text-anchor="middle" font-family="'Liberation Sans', sans-serif" font-size="23.5" fill="#a9abaf" stroke="#a9abaf" stroke-width="0.35">1 Dec</text><text x="878.0" y="1030" text-anchor="middle" font-family="'Liberation Sans', sans-serif" font-size="23.5" fill="#a9abaf" stroke="#a9abaf" stroke-width="0.35">5 Dec</text><text x="975.5" y="1030" text-anchor="middle" font-family="'Liberation Sans', sans-serif" font-size="23.5" fill="#a9abaf" stroke="#a9abaf" stroke-width="0.35">9 Dec</text><text x="1073.0" y="1030" text-anchor="middle" font-family="'Liberation Sans', sans-serif" font-size="23.5" fill="#a9abaf" stroke="#a9abaf" stroke-width="0.35">13 Dec</text><text x="1170.5" y="1030" text-anchor="middle" font-family="'Liberation Sans', sans-serif" font-size="23.5" fill="#a9abaf" stroke="#a9abaf" stroke-width="0.35">17 Dec</text><text x="1268.0" y="1030" text-anchor="middle" font-family="'Liberation Sans', sans-serif" font-size="23.5" fill="#a9abaf" stroke="#a9abaf" stroke-width="0.35">21 Dec</text><text x="1365.5" y="1030" text-anchor="middle" font-family="'Liberation Sans', sans-serif" font-size="23.5" fill="#a9abaf" stroke="#a9abaf" stroke-width="0.35">26 Dec</text><text x="1463.0" y="1030" text-anchor="middle" font-family="'Liberation Sans', sans-serif" font-size="23.5" fill="#a9abaf" stroke="#a9abaf" stroke-width="0.35">30 Dec</text><text x="1560.5" y="1030" text-anchor="middle" font-family="'Liberation Sans', sans-serif" font-size="23.5" fill="#a9abaf" stroke="#a9abaf" stroke-width="0.35">3 Jan</text><text x="1658.0" y="1030" text-anchor="middle" font-family="'Liberation Sans', sans-serif" font-size="23.5" fill="#a9abaf" stroke="#a9abaf" stroke-width="0.35">7 Jan</text><text x="1755.5" y="1030" text-anchor="middle" font-family="'Liberation Sans', sans-serif" font-size="23.5" fill="#a9abaf" stroke="#a9abaf" stroke-width="0.35">11 Jan</text><text x="1853.0" y="1030" text-anchor="middle" font-family="'Liberation Sans', sans-serif" font-size="23.5" fill="#a9abaf" stroke="#a9abaf" stroke-width="0.35">15 Jan</text><text x="1950.5" y="1030" text-anchor="middle" font-family="'Liberation Sans', sans-serif" font-size="23.5" fill="#a9abaf" stroke="#a9abaf" stroke-width="0.35">19 Jan</text><text x="2048.0" y="1030" text-anchor="middle" font-family="'Liberation Sans', sans-serif" font-size="23.5" fill="#a9abaf" stroke="#a9abaf" stroke-width="0.35">23 Jan</text><text x="2145.5" y="1030" text-anchor="middle" font-family="'Liberation Sans', sans-serif" font-size="23.5" fill="#a9abaf" stroke="#a9abaf" stroke-width="0.35">27 Jan</text><text x="2243.0" y="1030" text-anchor="middle" font-family="'Liberation Sans', sans-serif" font-size="23.5" fill="#a9abaf" stroke="#a9abaf" stroke-width="0.35">31 Jan</text><text x="2340.5" y="1030" text-anchor="middle" font-family="'Liberation Sans', sans-serif" font-size="23.5" fill="#a9abaf" stroke="#a9abaf" stroke-width="0.35">4 Feb</text><text x="2438.0" y="1030" text-anchor="middle" font-family="'Liberation Sans', sans-serif" font-size="23.5" fill="#a9abaf" stroke="#a9abaf" stroke-width="0.35">8 Feb</text><text x="2535.5" y="1030" text-anchor="middle" font-family="'Liberation Sans', sans-serif" font-size="23.5" fill="#a9abaf" stroke="#a9abaf" stroke-width="0.35">12 Feb</text><line x1="158.5" y1="626.8" x2="2671" y2="626.8" stroke="#e6e6e6" stroke-width="2.4" stroke-dasharray="8 4"/><line x1="2659.9" y1="197" x2="2659.9" y2="995" stroke="#b8b8bc" stroke-width="2.2" stroke-dasharray="8 4" stroke-dashoffset="1.4"/><circle cx="2658.5" cy="619.7" r="7.8" fill="#ffffff" stroke="#5cc58a" stroke-width="4"/><circle cx="2658.3" cy="850.4" r="8" fill="#ffffff" stroke="#e5bd55" stroke-width="4"/><rect x="52" y="603.7" width="99.6" height="43.7" rx="6" fill="#000000"/><text x="101.8" y="634" text-anchor="middle" font-family="'Liberation Sans', sans-serif" font-size="23.5" fill="#ffffff">23.11B</text><rect x="2677.2" y="603.3" width="140" height="44.7" rx="6" fill="#000000"/><text x="2692" y="634" font-family="'Liberation Sans', sans-serif" font-size="23.5" fill="#ffffff">2,546.15</text><rect x="2544.7" y="1001.8" width="226.3" height="43.5" rx="6" fill="#000000"/><text x="2658" y="1029.5" text-anchor="middle" font-family="'Liberation Sans', sans-serif" font-size="23.5" fill="#ffffff">17 Feb 2026, 03:00</text><g fill="#9a9c9e"><ellipse cx="2465.8" cy="936" rx="17.4" ry="14.8"/><ellipse cx="2466" cy="930.5" rx="22.9" ry="4.6"/><path d="M2452.5,925 L2455.6,919.3 2460,922.5 Z M2472,922.5 L2476.4,919.3 2479.5,925 Z"/><path d="M2457,949 L2476,949 2476,953 Z"/><ellipse cx="2466.9" cy="956.8" rx="15.2" ry="6.6"/><path d="M2457,958 L2477,958 2476.2,970.3 2468.7,970.3 2468.3,963.3 2465.5,963.3 2465.2,970.3 2459.3,970.3 Z"/></g><path d="M2450,969.6 Q2453,966 2457,964" stroke="#9a9c9e" stroke-width="1.6" fill="none"/><text transform="translate(2499.5,956.4) scale(0.8,1)" font-family="'Liberation Sans', sans-serif" font-weight="700" font-size="39" letter-spacing="-0.5" fill="#9a9c9e" stroke="#9a9c9e" stroke-width="0.8">coinglass</text><rect x="2179" y="668" width="425" height="210" rx="19" fill="#000" opacity="0.35" filter="url(#sh)"/><rect x="2179.2" y="667.9" width="424.6" height="209.9" rx="19" fill="#04050a"/><text x="2210.7" y="730.5" font-family="'Liberation Sans', sans-serif" font-size="28.5" stroke="#ffffff" stroke-width="0.3" fill="#ffffff">17 Feb 2026, 03:00</text><circle cx="2219" cy="782.9" r="7.9" fill="#e2bd62" stroke="#dfe3ea" stroke-width="3.8"/><text x="2238.3" y="793.9" font-family="'Liberation Sans', sans-serif" font-size="29.5" letter-spacing="-0.6" fill="#d3d8e0">ETH Price</text><text x="2572.1" y="793.9" text-anchor="end" font-family="'Liberation Sans', sans-serif" font-size="30" letter-spacing="-0.7" stroke="#ffffff" stroke-width="0.35" fill="#ffffff">$1996.25</text><circle cx="2219" cy="827.1" r="7.9" fill="#5bc287" stroke="#dfe3ea" stroke-width="3.8"/><text x="2238.3" y="837.6" font-family="'Liberation Sans', sans-serif" font-size="29.5" letter-spacing="0.5" fill="#d3d8e0">Open Interest</text><text x="2572.1" y="837.6" text-anchor="end" font-family="'Liberation Sans', sans-serif" font-size="30" letter-spacing="-0.8" stroke="#ffffff" stroke-width="0.35" fill="#ffffff">$23.47B</text><path d="M163.6,1131.5 L172.5,1131.5 L179.8,1133.2 L328.8,1131.5 L346.5,1128.5 L435.0,1128.5 L464.6,1127.3 L473.4,1125.6 L500.0,1126.1 L503.1,1124.5 L507.8,1125.3 L512.4,1125.3 L515.5,1123.8 L521.0,1123.0 L523.3,1119.9 L526.4,1116.8 L531.1,1114.4 L533.4,1118.3 L536.5,1115.2 L541.9,1113.7 L545.0,1115.2 L547.4,1112.9 L555.9,1112.9 L559.0,1108.7 L562.1,1108.2 L563.7,1109.8 L566.8,1107.1 L573.0,1106.7 L577.6,1104.3 L580.0,1105.1 L582.3,1109.8 L586.2,1112.1 L589.3,1110.2 L593.2,1111.6 L598.6,1105.6 L637.4,1106.7 L639.8,1096.6 L642.1,1096.6 L644.4,1099.7 L649.1,1097.4 L651.4,1099.4 L655.3,1091.9 L660.0,1089.6 L668.5,1072.5 L670.8,1073.3 L674.7,1077.2 L677.0,1081.8 L683.2,1105.1 L686.3,1093.5 L688.7,1090.7 L690.2,1098.1 L694.9,1091.1 L700.3,1092.2 L701.9,1096.6 L705.0,1095.3 L707.3,1096.6 L709.6,1094.3 L714.3,1099.4 L716.6,1099.7 L718.2,1104.7 L720.5,1103.6 L722.8,1105.9 L727.5,1099.7 L729.8,1100.5 L732.9,1097.8 L736.8,1101.2 L742.2,1102.8 L746.9,1105.1 L750.0,1107.1 L754.7,1100.9 L762.4,1096.6 L767.1,1095.0 L771.7,1084.9 L775.6,1084.9 L779.5,1082.6 L783.4,1087.3 L785.7,1084.9 L790.4,1082.6 L796.6,1083.9 L799.7,1079.5 L802.8,1072.5 L804.3,1073.0 L806.7,1080.3 L812.1,1083.4 L815.2,1078.0 L819.9,1082.3 L823.0,1091.1 L824.5,1085.7 L827.6,1088.8 L831.5,1090.1 L835.4,1081.8 L841.6,1078.0 L847.8,1078.0 L850.9,1074.1 L854.8,1073.3 L858.7,1070.2 L862.6,1068.3 L864.9,1071.7 L867.2,1065.5 L870.3,1063.2 L872.7,1063.7 L875.8,1059.0 L878.9,1061.2 L883.5,1061.6 L887.4,1071.0 L889.8,1065.5 L892.1,1070.2 L894.4,1064.8 L896.7,1068.6 L900.0,1062.4 L901.6,1060.1 L905.9,1070.2 L907.8,1065.5 L917.1,1077.2 L919.4,1073.3 L923.3,1071.7 L928.0,1069.4 L931.1,1070.5 L933.4,1078.0 L938.8,1074.1 L941.1,1075.6 L945.8,1086.5 L949.7,1081.8 L955.9,1085.7 L959.0,1094.3 L965.2,1096.6 L969.1,1093.2 L973.0,1091.6 L975.3,1087.6 L980.0,1085.4 L984.6,1088.5 L988.5,1085.7 L993.2,1093.5 L997.8,1093.8 L1003.3,1088.5 L1005.6,1088.8 L1008.7,1094.3 L1014.1,1094.3 L1018.8,1094.3 L1024.2,1088.5 L1026.6,1089.6 L1033.5,1084.9 L1036.6,1081.8 L1042.1,1079.2 L1046.7,1083.4 L1049.1,1083.4 L1051.4,1087.6 L1053.7,1085.7 L1059.9,1086.5 L1064.6,1088.5 L1067.7,1087.6 L1070.8,1090.1 L1077.0,1090.7 L1081.7,1093.5 L1084.8,1100.5 L1088.7,1103.6 L1091.0,1101.2 L1096.4,1103.1 L1101.9,1104.0 L1105.0,1107.8 L1109.6,1104.7 L1113.5,1106.7 L1117.4,1106.2 L1120.5,1108.7 L1126.7,1117.5 L1129.8,1119.6 L1132.9,1117.1 L1134.5,1118.3 L1136.8,1116.0 L1145.3,1118.3 L1150.0,1116.5 L1154.7,1116.5 L1157.8,1118.3 L1164.7,1110.2 L1168.6,1110.6 L1171.7,1109.3 L1174.1,1112.1 L1176.4,1107.8 L1179.5,1108.7 L1182.6,1109.3 L1185.7,1107.8 L1189.6,1108.7 L1195.0,1103.6 L1198.9,1105.9 L1202.0,1109.3 L1208.2,1108.2 L1211.3,1111.3 L1223.0,1110.6 L1227.6,1107.1 L1231.5,1109.0 L1236.2,1113.7 L1249.4,1113.7 L1252.5,1114.9 L1255.6,1113.4 L1263.4,1114.4 L1275.8,1114.4 L1279.7,1110.2 L1288.2,1109.8 L1292.1,1109.3 L1295.2,1113.7 L1300.0,1115.5 L1307.8,1117.5 L1315.5,1116.5 L1317.1,1117.1 L1320.2,1114.4 L1335.7,1114.4 L1338.8,1116.8 L1343.5,1116.0 L1355.9,1116.5 L1363.7,1114.9 L1373.0,1110.6 L1379.2,1109.3 L1390.1,1109.0 L1394.7,1108.7 L1400.2,1109.0 L1404.0,1111.3 L1411.8,1108.2 L1418.0,1109.3 L1425.8,1109.0 L1432.0,1110.6 L1435.1,1112.4 L1439.8,1108.2 L1446.0,1107.5 L1464.6,1105.1 L1470.8,1105.1 L1477.0,1101.6 L1483.2,1105.6 L1492.5,1104.7 L1494.9,1106.2 L1499.5,1103.6 L1505.0,1106.2 L1520.5,1105.9 L1523.6,1106.7 L1528.3,1105.1 L1532.9,1104.7 L1537.6,1105.1 L1545.3,1108.7 L1551.6,1107.5 L1555.4,1105.1 L1562.4,1106.2 L1565.5,1104.3 L1570.2,1104.3 L1573.3,1105.6 L1581.1,1104.3 L1602.8,1105.6 L1610.6,1105.1 L1616.8,1106.2 L1621.4,1108.7 L1630.7,1108.7 L1633.9,1107.8 L1637.7,1109.0 L1649.4,1109.8 L1655.6,1109.0 L1663.4,1110.2 L1671.1,1108.2 L1678.9,1108.7 L1683.5,1110.6 L1689.8,1109.8 L1694.4,1109.0 L1700.0,1106.7 L1707.8,1105.6 L1714.8,1104.7 L1717.1,1101.2 L1724.1,1102.8 L1727.2,1104.0 L1730.3,1103.6 L1734.9,1102.0 L1741.9,1102.8 L1749.7,1097.4 L1753.6,1099.4 L1762.1,1100.5 L1768.3,1098.4 L1773.0,1097.4 L1776.1,1098.4 L1779.2,1097.8 L1784.6,1099.7 L1789.3,1094.3 L1796.3,1094.7 L1800.9,1096.6 L1804.8,1099.4 L1811.8,1098.4 L1818.8,1098.9 L1824.2,1095.3 L1830.4,1090.4 L1836.6,1087.6 L1840.5,1088.8 L1845.2,1083.4 L1849.8,1080.3 L1855.3,1073.3 L1861.5,1072.0 L1866.1,1079.2 L1870.0,1079.5 L1872.4,1082.3 L1877.0,1078.0 L1883.2,1079.2 L1887.1,1082.6 L1892.5,1079.2 L1894.9,1079.2 L1898.0,1087.6 L1900.3,1086.0 L1902.6,1088.0 L1908.9,1083.4 L1914.3,1083.4 L1918.9,1088.0 L1922.8,1085.4 L1929.8,1088.8 L1939.1,1085.4 L1941.5,1074.1 L1945.3,1075.2 L1948.4,1073.3 L1951.6,1075.6 L1957.8,1074.5 L1964.0,1076.7 L1969.4,1079.5 L1971.7,1077.6 L1975.6,1079.5 L1981.1,1081.8 L1988.8,1080.7 L1991.9,1086.5 L1997.4,1087.3 L2002.0,1085.4 L2005.9,1081.1 L2010.6,1079.2 L2015.2,1082.3 L2024.5,1083.4 L2029.2,1096.6 L2032.3,1098.4 L2034.6,1094.3 L2038.5,1092.2 L2040.8,1094.3 L2050.9,1091.1 L2055.6,1096.3 L2061.8,1094.7 L2067.2,1099.7 L2075.0,1096.3 L2078.9,1098.4 L2083.5,1094.3 L2092.1,1092.2 L2096.0,1095.8 L2100.0,1096.3 L2105.4,1097.4 L2110.9,1093.5 L2117.1,1091.6 L2124.1,1095.8 L2128.7,1093.2 L2134.2,1096.3 L2136.0,1095.8 L2138.8,1088.0 L2143.2,1081.8 L2148.1,1086.5 L2152.0,1086.0 L2154.3,1081.8 L2159.0,1080.7 L2161.3,1077.2 L2168.3,1077.6 L2173.0,1071.7 L2175.3,1076.4 L2182.3,1072.5 L2184.6,1073.6 L2187.7,1081.8 L2193.9,1079.8 L2197.0,1082.3 L2200.9,1081.8 L2207.1,1076.4 L2210.2,1082.6 L2216.5,1083.9 L2220.3,1082.3 L2228.9,1082.9 L2232.8,1086.0 L2235.1,1083.4 L2239.8,1088.8 L2244.4,1093.5 L2249.1,1093.5 L2255.3,1091.9 L2259.9,1092.7 L2263.0,1090.7 L2267.7,1098.1 L2271.6,1100.9 L2274.7,1099.7 L2283.2,1105.1 L2288.7,1104.3 L2291.0,1102.8 L2298.0,1102.8 L2302.6,1105.9 L2308.9,1106.7 L2313.5,1111.3 L2318.9,1109.0 L2323.6,1110.2 L2328.3,1109.3 L2330.6,1107.5 L2336.0,1106.2 L2346.1,1106.2 L2351.6,1094.7 L2355.4,1093.8 L2361.6,1095.3 L2364.8,1092.7 L2367.1,1095.0 L2371.7,1092.7 L2374.8,1095.0 L2378.0,1094.7 L2381.1,1096.9 L2388.0,1091.1 L2391.1,1094.3 L2397.4,1095.3 L2399.7,1098.1 L2409.0,1095.8 L2411.3,1097.4 L2414.4,1094.3 L2417.5,1095.3 L2423.0,1088.5 L2426.9,1086.0 L2430.7,1078.7 L2435.4,1075.2 L2437.7,1077.6 L2441.6,1073.6 L2445.5,1076.4 L2448.6,1081.1 L2450.2,1077.6 L2453.3,1076.4 L2459.5,1062.1 L2467.2,1066.8 L2471.9,1058.5 L2475.8,1060.9 L2480.4,1065.5 L2485.1,1064.8 L2488.2,1066.8 L2492.1,1066.3 L2496.7,1061.2 L2500.0,1063.2 L2502.0,1062.4 L2506.0,1064.3 L2510.6,1073.7 L2520.6,1063.2 L2526.3,1065.1 L2529.6,1076.5 L2531.2,1067.6 L2536.0,1074.1 L2538.5,1071.6 L2541.7,1074.1 L2547.4,1069.5 L2551.5,1073.7 L2554.7,1073.3 L2557.1,1081.4 L2563.6,1078.5 L2570.1,1084.6 L2577.4,1091.6 L2580.7,1087.9 L2588.8,1087.4 L2593.7,1085.1 L2598.5,1082.2 L2601.8,1086.2 L2608.3,1090.3 L2610.7,1087.9 L2621.2,1087.9 L2628.5,1083.0 L2631.0,1086.2 L2635.0,1086.2 L2638.3,1081.9 L2642.3,1082.5 L2645.6,1088.4 L2653.7,1087.9 L2659.4,1099.2 L2675.6,1100 L2675.6,1156 L163.6,1156 Z" fill="#0c1120"/><rect x="2558" y="1046" width="117.6" height="110" fill="#0a1024"/><path d="M163.6,1131.5 L172.5,1131.5 L179.8,1133.2 L328.8,1131.5 L346.5,1128.5 L435.0,1128.5 L464.6,1127.3 L473.4,1125.6 L500.0,1126.1 L503.1,1124.5 L507.8,1125.3 L512.4,1125.3 L515.5,1123.8 L521.0,1123.0 L523.3,1119.9 L526.4,1116.8 L531.1,1114.4 L533.4,1118.3 L536.5,1115.2 L541.9,1113.7 L545.0,1115.2 L547.4,1112.9 L555.9,1112.9 L559.0,1108.7 L562.1,1108.2 L563.7,1109.8 L566.8,1107.1 L573.0,1106.7 L577.6,1104.3 L580.0,1105.1 L582.3,1109.8 L586.2,1112.1 L589.3,1110.2 L593.2,1111.6 L598.6,1105.6 L637.4,1106.7 L639.8,1096.6 L642.1,1096.6 L644.4,1099.7 L649.1,1097.4 L651.4,1099.4 L655.3,1091.9 L660.0,1089.6 L668.5,1072.5 L670.8,1073.3 L674.7,1077.2 L677.0,1081.8 L683.2,1105.1 L686.3,1093.5 L688.7,1090.7 L690.2,1098.1 L694.9,1091.1 L700.3,1092.2 L701.9,1096.6 L705.0,1095.3 L707.3,1096.6 L709.6,1094.3 L714.3,1099.4 L716.6,1099.7 L718.2,1104.7 L720.5,1103.6 L722.8,1105.9 L727.5,1099.7 L729.8,1100.5 L732.9,1097.8 L736.8,1101.2 L742.2,1102.8 L746.9,1105.1 L750.0,1107.1 L754.7,1100.9 L762.4,1096.6 L767.1,1095.0 L771.7,1084.9 L775.6,1084.9 L779.5,1082.6 L783.4,1087.3 L785.7,1084.9 L790.4,1082.6 L796.6,1083.9 L799.7,1079.5 L802.8,1072.5 L804.3,1073.0 L806.7,1080.3 L812.1,1083.4 L815.2,1078.0 L819.9,1082.3 L823.0,1091.1 L824.5,1085.7 L827.6,1088.8 L831.5,1090.1 L835.4,1081.8 L841.6,1078.0 L847.8,1078.0 L850.9,1074.1 L854.8,1073.3 L858.7,1070.2 L862.6,1068.3 L864.9,1071.7 L867.2,1065.5 L870.3,1063.2 L872.7,1063.7 L875.8,1059.0 L878.9,1061.2 L883.5,1061.6 L887.4,1071.0 L889.8,1065.5 L892.1,1070.2 L894.4,1064.8 L896.7,1068.6 L900.0,1062.4 L901.6,1060.1 L905.9,1070.2 L907.8,1065.5 L917.1,1077.2 L919.4,1073.3 L923.3,1071.7 L928.0,1069.4 L931.1,1070.5 L933.4,1078.0 L938.8,1074.1 L941.1,1075.6 L945.8,1086.5 L949.7,1081.8 L955.9,1085.7 L959.0,1094.3 L965.2,1096.6 L969.1,1093.2 L973.0,1091.6 L975.3,1087.6 L980.0,1085.4 L984.6,1088.5 L988.5,1085.7 L993.2,1093.5 L997.8,1093.8 L1003.3,1088.5 L1005.6,1088.8 L1008.7,1094.3 L1014.1,1094.3 L1018.8,1094.3 L1024.2,1088.5 L1026.6,1089.6 L1033.5,1084.9 L1036.6,1081.8 L1042.1,1079.2 L1046.7,1083.4 L1049.1,1083.4 L1051.4,1087.6 L1053.7,1085.7 L1059.9,1086.5 L1064.6,1088.5 L1067.7,1087.6 L1070.8,1090.1 L1077.0,1090.7 L1081.7,1093.5 L1084.8,1100.5 L1088.7,1103.6 L1091.0,1101.2 L1096.4,1103.1 L1101.9,1104.0 L1105.0,1107.8 L1109.6,1104.7 L1113.5,1106.7 L1117.4,1106.2 L1120.5,1108.7 L1126.7,1117.5 L1129.8,1119.6 L1132.9,1117.1 L1134.5,1118.3 L1136.8,1116.0 L1145.3,1118.3 L1150.0,1116.5 L1154.7,1116.5 L1157.8,1118.3 L1164.7,1110.2 L1168.6,1110.6 L1171.7,1109.3 L1174.1,1112.1 L1176.4,1107.8 L1179.5,1108.7 L1182.6,1109.3 L1185.7,1107.8 L1189.6,1108.7 L1195.0,1103.6 L1198.9,1105.9 L1202.0,1109.3 L1208.2,1108.2 L1211.3,1111.3 L1223.0,1110.6 L1227.6,1107.1 L1231.5,1109.0 L1236.2,1113.7 L1249.4,1113.7 L1252.5,1114.9 L1255.6,1113.4 L1263.4,1114.4 L1275.8,1114.4 L1279.7,1110.2 L1288.2,1109.8 L1292.1,1109.3 L1295.2,1113.7 L1300.0,1115.5 L1307.8,1117.5 L1315.5,1116.5 L1317.1,1117.1 L1320.2,1114.4 L1335.7,1114.4 L1338.8,1116.8 L1343.5,1116.0 L1355.9,1116.5 L1363.7,1114.9 L1373.0,1110.6 L1379.2,1109.3 L1390.1,1109.0 L1394.7,1108.7 L1400.2,1109.0 L1404.0,1111.3 L1411.8,1108.2 L1418.0,1109.3 L1425.8,1109.0 L1432.0,1110.6 L1435.1,1112.4 L1439.8,1108.2 L1446.0,1107.5 L1464.6,1105.1 L1470.8,1105.1 L1477.0,1101.6 L1483.2,1105.6 L1492.5,1104.7 L1494.9,1106.2 L1499.5,1103.6 L1505.0,1106.2 L1520.5,1105.9 L1523.6,1106.7 L1528.3,1105.1 L1532.9,1104.7 L1537.6,1105.1 L1545.3,1108.7 L1551.6,1107.5 L1555.4,1105.1 L1562.4,1106.2 L1565.5,1104.3 L1570.2,1104.3 L1573.3,1105.6 L1581.1,1104.3 L1602.8,1105.6 L1610.6,1105.1 L1616.8,1106.2 L1621.4,1108.7 L1630.7,1108.7 L1633.9,1107.8 L1637.7,1109.0 L1649.4,1109.8 L1655.6,1109.0 L1663.4,1110.2 L1671.1,1108.2 L1678.9,1108.7 L1683.5,1110.6 L1689.8,1109.8 L1694.4,1109.0 L1700.0,1106.7 L1707.8,1105.6 L1714.8,1104.7 L1717.1,1101.2 L1724.1,1102.8 L1727.2,1104.0 L1730.3,1103.6 L1734.9,1102.0 L1741.9,1102.8 L1749.7,1097.4 L1753.6,1099.4 L1762.1,1100.5 L1768.3,1098.4 L1773.0,1097.4 L1776.1,1098.4 L1779.2,1097.8 L1784.6,1099.7 L1789.3,1094.3 L1796.3,1094.7 L1800.9,1096.6 L1804.8,1099.4 L1811.8,1098.4 L1818.8,1098.9 L1824.2,1095.3 L1830.4,1090.4 L1836.6,1087.6 L1840.5,1088.8 L1845.2,1083.4 L1849.8,1080.3 L1855.3,1073.3 L1861.5,1072.0 L1866.1,1079.2 L1870.0,1079.5 L1872.4,1082.3 L1877.0,1078.0 L1883.2,1079.2 L1887.1,1082.6 L1892.5,1079.2 L1894.9,1079.2 L1898.0,1087.6 L1900.3,1086.0 L1902.6,1088.0 L1908.9,1083.4 L1914.3,1083.4 L1918.9,1088.0 L1922.8,1085.4 L1929.8,1088.8 L1939.1,1085.4 L1941.5,1074.1 L1945.3,1075.2 L1948.4,1073.3 L1951.6,1075.6 L1957.8,1074.5 L1964.0,1076.7 L1969.4,1079.5 L1971.7,1077.6 L1975.6,1079.5 L1981.1,1081.8 L1988.8,1080.7 L1991.9,1086.5 L1997.4,1087.3 L2002.0,1085.4 L2005.9,1081.1 L2010.6,1079.2 L2015.2,1082.3 L2024.5,1083.4 L2029.2,1096.6 L2032.3,1098.4 L2034.6,1094.3 L2038.5,1092.2 L2040.8,1094.3 L2050.9,1091.1 L2055.6,1096.3 L2061.8,1094.7 L2067.2,1099.7 L2075.0,1096.3 L2078.9,1098.4 L2083.5,1094.3 L2092.1,1092.2 L2096.0,1095.8 L2100.0,1096.3 L2105.4,1097.4 L2110.9,1093.5 L2117.1,1091.6 L2124.1,1095.8 L2128.7,1093.2 L2134.2,1096.3 L2136.0,1095.8 L2138.8,1088.0 L2143.2,1081.8 L2148.1,1086.5 L2152.0,1086.0 L2154.3,1081.8 L2159.0,1080.7 L2161.3,1077.2 L2168.3,1077.6 L2173.0,1071.7 L2175.3,1076.4 L2182.3,1072.5 L2184.6,1073.6 L2187.7,1081.8 L2193.9,1079.8 L2197.0,1082.3 L2200.9,1081.8 L2207.1,1076.4 L2210.2,1082.6 L2216.5,1083.9 L2220.3,1082.3 L2228.9,1082.9 L2232.8,1086.0 L2235.1,1083.4 L2239.8,1088.8 L2244.4,1093.5 L2249.1,1093.5 L2255.3,1091.9 L2259.9,1092.7 L2263.0,1090.7 L2267.7,1098.1 L2271.6,1100.9 L2274.7,1099.7 L2283.2,1105.1 L2288.7,1104.3 L2291.0,1102.8 L2298.0,1102.8 L2302.6,1105.9 L2308.9,1106.7 L2313.5,1111.3 L2318.9,1109.0 L2323.6,1110.2 L2328.3,1109.3 L2330.6,1107.5 L2336.0,1106.2 L2346.1,1106.2 L2351.6,1094.7 L2355.4,1093.8 L2361.6,1095.3 L2364.8,1092.7 L2367.1,1095.0 L2371.7,1092.7 L2374.8,1095.0 L2378.0,1094.7 L2381.1,1096.9 L2388.0,1091.1 L2391.1,1094.3 L2397.4,1095.3 L2399.7,1098.1 L2409.0,1095.8 L2411.3,1097.4 L2414.4,1094.3 L2417.5,1095.3 L2423.0,1088.5 L2426.9,1086.0 L2430.7,1078.7 L2435.4,1075.2 L2437.7,1077.6 L2441.6,1073.6 L2445.5,1076.4 L2448.6,1081.1 L2450.2,1077.6 L2453.3,1076.4 L2459.5,1062.1 L2467.2,1066.8 L2471.9,1058.5 L2475.8,1060.9 L2480.4,1065.5 L2485.1,1064.8 L2488.2,1066.8 L2492.1,1066.3 L2496.7,1061.2 L2500.0,1063.2 L2502.0,1062.4 L2506.0,1064.3 L2510.6,1073.7 L2520.6,1063.2 L2526.3,1065.1 L2529.6,1076.5 L2531.2,1067.6 L2536.0,1074.1 L2538.5,1071.6 L2541.7,1074.1 L2547.4,1069.5 L2551.5,1073.7 L2554.7,1073.3 L2557.1,1081.4 L2563.6,1078.5 L2570.1,1084.6 L2577.4,1091.6 L2580.7,1087.9 L2588.8,1087.4 L2593.7,1085.1 L2598.5,1082.2 L2601.8,1086.2 L2608.3,1090.3 L2610.7,1087.9 L2621.2,1087.9 L2628.5,1083.0 L2631.0,1086.2 L2635.0,1086.2 L2638.3,1081.9 L2642.3,1082.5 L2645.6,1088.4 L2653.7,1087.9 L2659.4,1099.2 L2675.6,1100 L2675.6,1156 L163.6,1156 Z" fill="#232b47" clip-path="url(#selclip)"/><path d="M163.6,1131.5 L172.5,1131.5 L179.8,1133.2 L328.8,1131.5 L346.5,1128.5 L435.0,1128.5 L464.6,1127.3 L473.4,1125.6 L500.0,1126.1 L503.1,1124.5 L507.8,1125.3 L512.4,1125.3 L515.5,1123.8 L521.0,1123.0 L523.3,1119.9 L526.4,1116.8 L531.1,1114.4 L533.4,1118.3 L536.5,1115.2 L541.9,1113.7 L545.0,1115.2 L547.4,1112.9 L555.9,1112.9 L559.0,1108.7 L562.1,1108.2 L563.7,1109.8 L566.8,1107.1 L573.0,1106.7 L577.6,1104.3 L580.0,1105.1 L582.3,1109.8 L586.2,1112.1 L589.3,1110.2 L593.2,1111.6 L598.6,1105.6 L637.4,1106.7 L639.8,1096.6 L642.1,1096.6 L644.4,1099.7 L649.1,1097.4 L651.4,1099.4 L655.3,1091.9 L660.0,1089.6 L668.5,1072.5 L670.8,1073.3 L674.7,1077.2 L677.0,1081.8 L683.2,1105.1 L686.3,1093.5 L688.7,1090.7 L690.2,1098.1 L694.9,1091.1 L700.3,1092.2 L701.9,1096.6 L705.0,1095.3 L707.3,1096.6 L709.6,1094.3 L714.3,1099.4 L716.6,1099.7 L718.2,1104.7 L720.5,1103.6 L722.8,1105.9 L727.5,1099.7 L729.8,1100.5 L732.9,1097.8 L736.8,1101.2 L742.2,1102.8 L746.9,1105.1 L750.0,1107.1 L754.7,1100.9 L762.4,1096.6 L767.1,1095.0 L771.7,1084.9 L775.6,1084.9 L779.5,1082.6 L783.4,1087.3 L785.7,1084.9 L790.4,1082.6 L796.6,1083.9 L799.7,1079.5 L802.8,1072.5 L804.3,1073.0 L806.7,1080.3 L812.1,1083.4 L815.2,1078.0 L819.9,1082.3 L823.0,1091.1 L824.5,1085.7 L827.6,1088.8 L831.5,1090.1 L835.4,1081.8 L841.6,1078.0 L847.8,1078.0 L850.9,1074.1 L854.8,1073.3 L858.7,1070.2 L862.6,1068.3 L864.9,1071.7 L867.2,1065.5 L870.3,1063.2 L872.7,1063.7 L875.8,1059.0 L878.9,1061.2 L883.5,1061.6 L887.4,1071.0 L889.8,1065.5 L892.1,1070.2 L894.4,1064.8 L896.7,1068.6 L900.0,1062.4 L901.6,1060.1 L905.9,1070.2 L907.8,1065.5 L917.1,1077.2 L919.4,1073.3 L923.3,1071.7 L928.0,1069.4 L931.1,1070.5 L933.4,1078.0 L938.8,1074.1 L941.1,1075.6 L945.8,1086.5 L949.7,1081.8 L955.9,1085.7 L959.0,1094.3 L965.2,1096.6 L969.1,1093.2 L973.0,1091.6 L975.3,1087.6 L980.0,1085.4 L984.6,1088.5 L988.5,1085.7 L993.2,1093.5 L997.8,1093.8 L1003.3,1088.5 L1005.6,1088.8 L1008.7,1094.3 L1014.1,1094.3 L1018.8,1094.3 L1024.2,1088.5 L1026.6,1089.6 L1033.5,1084.9 L1036.6,1081.8 L1042.1,1079.2 L1046.7,1083.4 L1049.1,1083.4 L1051.4,1087.6 L1053.7,1085.7 L1059.9,1086.5 L1064.6,1088.5 L1067.7,1087.6 L1070.8,1090.1 L1077.0,1090.7 L1081.7,1093.5 L1084.8,1100.5 L1088.7,1103.6 L1091.0,1101.2 L1096.4,1103.1 L1101.9,1104.0 L1105.0,1107.8 L1109.6,1104.7 L1113.5,1106.7 L1117.4,1106.2 L1120.5,1108.7 L1126.7,1117.5 L1129.8,1119.6 L1132.9,1117.1 L1134.5,1118.3 L1136.8,1116.0 L1145.3,1118.3 L1150.0,1116.5 L1154.7,1116.5 L1157.8,1118.3 L1164.7,1110.2 L1168.6,1110.6 L1171.7,1109.3 L1174.1,1112.1 L1176.4,1107.8 L1179.5,1108.7 L1182.6,1109.3 L1185.7,1107.8 L1189.6,1108.7 L1195.0,1103.6 L1198.9,1105.9 L1202.0,1109.3 L1208.2,1108.2 L1211.3,1111.3 L1223.0,1110.6 L1227.6,1107.1 L1231.5,1109.0 L1236.2,1113.7 L1249.4,1113.7 L1252.5,1114.9 L1255.6,1113.4 L1263.4,1114.4 L1275.8,1114.4 L1279.7,1110.2 L1288.2,1109.8 L1292.1,1109.3 L1295.2,1113.7 L1300.0,1115.5 L1307.8,1117.5 L1315.5,1116.5 L1317.1,1117.1 L1320.2,1114.4 L1335.7,1114.4 L1338.8,1116.8 L1343.5,1116.0 L1355.9,1116.5 L1363.7,1114.9 L1373.0,1110.6 L1379.2,1109.3 L1390.1,1109.0 L1394.7,1108.7 L1400.2,1109.0 L1404.0,1111.3 L1411.8,1108.2 L1418.0,1109.3 L1425.8,1109.0 L1432.0,1110.6 L1435.1,1112.4 L1439.8,1108.2 L1446.0,1107.5 L1464.6,1105.1 L1470.8,1105.1 L1477.0,1101.6 L1483.2,1105.6 L1492.5,1104.7 L1494.9,1106.2 L1499.5,1103.6 L1505.0,1106.2 L1520.5,1105.9 L1523.6,1106.7 L1528.3,1105.1 L1532.9,1104.7 L1537.6,1105.1 L1545.3,1108.7 L1551.6,1107.5 L1555.4,1105.1 L1562.4,1106.2 L1565.5,1104.3 L1570.2,1104.3 L1573.3,1105.6 L1581.1,1104.3 L1602.8,1105.6 L1610.6,1105.1 L1616.8,1106.2 L1621.4,1108.7 L1630.7,1108.7 L1633.9,1107.8 L1637.7,1109.0 L1649.4,1109.8 L1655.6,1109.0 L1663.4,1110.2 L1671.1,1108.2 L1678.9,1108.7 L1683.5,1110.6 L1689.8,1109.8 L1694.4,1109.0 L1700.0,1106.7 L1707.8,1105.6 L1714.8,1104.7 L1717.1,1101.2 L1724.1,1102.8 L1727.2,1104.0 L1730.3,1103.6 L1734.9,1102.0 L1741.9,1102.8 L1749.7,1097.4 L1753.6,1099.4 L1762.1,1100.5 L1768.3,1098.4 L1773.0,1097.4 L1776.1,1098.4 L1779.2,1097.8 L1784.6,1099.7 L1789.3,1094.3 L1796.3,1094.7 L1800.9,1096.6 L1804.8,1099.4 L1811.8,1098.4 L1818.8,1098.9 L1824.2,1095.3 L1830.4,1090.4 L1836.6,1087.6 L1840.5,1088.8 L1845.2,1083.4 L1849.8,1080.3 L1855.3,1073.3 L1861.5,1072.0 L1866.1,1079.2 L1870.0,1079.5 L1872.4,1082.3 L1877.0,1078.0 L1883.2,1079.2 L1887.1,1082.6 L1892.5,1079.2 L1894.9,1079.2 L1898.0,1087.6 L1900.3,1086.0 L1902.6,1088.0 L1908.9,1083.4 L1914.3,1083.4 L1918.9,1088.0 L1922.8,1085.4 L1929.8,1088.8 L1939.1,1085.4 L1941.5,1074.1 L1945.3,1075.2 L1948.4,1073.3 L1951.6,1075.6 L1957.8,1074.5 L1964.0,1076.7 L1969.4,1079.5 L1971.7,1077.6 L1975.6,1079.5 L1981.1,1081.8 L1988.8,1080.7 L1991.9,1086.5 L1997.4,1087.3 L2002.0,1085.4 L2005.9,1081.1 L2010.6,1079.2 L2015.2,1082.3 L2024.5,1083.4 L2029.2,1096.6 L2032.3,1098.4 L2034.6,1094.3 L2038.5,1092.2 L2040.8,1094.3 L2050.9,1091.1 L2055.6,1096.3 L2061.8,1094.7 L2067.2,1099.7 L2075.0,1096.3 L2078.9,1098.4 L2083.5,1094.3 L2092.1,1092.2 L2096.0,1095.8 L2100.0,1096.3 L2105.4,1097.4 L2110.9,1093.5 L2117.1,1091.6 L2124.1,1095.8 L2128.7,1093.2 L2134.2,1096.3 L2136.0,1095.8 L2138.8,1088.0 L2143.2,1081.8 L2148.1,1086.5 L2152.0,1086.0 L2154.3,1081.8 L2159.0,1080.7 L2161.3,1077.2 L2168.3,1077.6 L2173.0,1071.7 L2175.3,1076.4 L2182.3,1072.5 L2184.6,1073.6 L2187.7,1081.8 L2193.9,1079.8 L2197.0,1082.3 L2200.9,1081.8 L2207.1,1076.4 L2210.2,1082.6 L2216.5,1083.9 L2220.3,1082.3 L2228.9,1082.9 L2232.8,1086.0 L2235.1,1083.4 L2239.8,1088.8 L2244.4,1093.5 L2249.1,1093.5 L2255.3,1091.9 L2259.9,1092.7 L2263.0,1090.7 L2267.7,1098.1 L2271.6,1100.9 L2274.7,1099.7 L2283.2,1105.1 L2288.7,1104.3 L2291.0,1102.8 L2298.0,1102.8 L2302.6,1105.9 L2308.9,1106.7 L2313.5,1111.3 L2318.9,1109.0 L2323.6,1110.2 L2328.3,1109.3 L2330.6,1107.5 L2336.0,1106.2 L2346.1,1106.2 L2351.6,1094.7 L2355.4,1093.8 L2361.6,1095.3 L2364.8,1092.7 L2367.1,1095.0 L2371.7,1092.7 L2374.8,1095.0 L2378.0,1094.7 L2381.1,1096.9 L2388.0,1091.1 L2391.1,1094.3 L2397.4,1095.3 L2399.7,1098.1 L2409.0,1095.8 L2411.3,1097.4 L2414.4,1094.3 L2417.5,1095.3 L2423.0,1088.5 L2426.9,1086.0 L2430.7,1078.7 L2435.4,1075.2 L2437.7,1077.6 L2441.6,1073.6 L2445.5,1076.4 L2448.6,1081.1 L2450.2,1077.6 L2453.3,1076.4 L2459.5,1062.1 L2467.2,1066.8 L2471.9,1058.5 L2475.8,1060.9 L2480.4,1065.5 L2485.1,1064.8 L2488.2,1066.8 L2492.1,1066.3 L2496.7,1061.2 L2500.0,1063.2 L2502.0,1062.4 L2506.0,1064.3 L2510.6,1073.7 L2520.6,1063.2 L2526.3,1065.1 L2529.6,1076.5 L2531.2,1067.6 L2536.0,1074.1 L2538.5,1071.6 L2541.7,1074.1 L2547.4,1069.5 L2551.5,1073.7 L2554.7,1073.3 L2557.1,1081.4 L2563.6,1078.5 L2570.1,1084.6 L2577.4,1091.6 L2580.7,1087.9 L2588.8,1087.4 L2593.7,1085.1 L2598.5,1082.2 L2601.8,1086.2 L2608.3,1090.3 L2610.7,1087.9 L2621.2,1087.9 L2628.5,1083.0 L2631.0,1086.2 L2635.0,1086.2 L2638.3,1081.9 L2642.3,1082.5 L2645.6,1088.4 L2653.7,1087.9 L2659.4,1099.2" fill="none" stroke="#4466c0" stroke-width="1.3"/><path d="M163.6,1131.5 L172.5,1131.5 L179.8,1133.2 L328.8,1131.5 L346.5,1128.5 L435.0,1128.5 L464.6,1127.3 L473.4,1125.6 L500.0,1126.1 L503.1,1124.5 L507.8,1125.3 L512.4,1125.3 L515.5,1123.8 L521.0,1123.0 L523.3,1119.9 L526.4,1116.8 L531.1,1114.4 L533.4,1118.3 L536.5,1115.2 L541.9,1113.7 L545.0,1115.2 L547.4,1112.9 L555.9,1112.9 L559.0,1108.7 L562.1,1108.2 L563.7,1109.8 L566.8,1107.1 L573.0,1106.7 L577.6,1104.3 L580.0,1105.1 L582.3,1109.8 L586.2,1112.1 L589.3,1110.2 L593.2,1111.6 L598.6,1105.6 L637.4,1106.7 L639.8,1096.6 L642.1,1096.6 L644.4,1099.7 L649.1,1097.4 L651.4,1099.4 L655.3,1091.9 L660.0,1089.6 L668.5,1072.5 L670.8,1073.3 L674.7,1077.2 L677.0,1081.8 L683.2,1105.1 L686.3,1093.5 L688.7,1090.7 L690.2,1098.1 L694.9,1091.1 L700.3,1092.2 L701.9,1096.6 L705.0,1095.3 L707.3,1096.6 L709.6,1094.3 L714.3,1099.4 L716.6,1099.7 L718.2,1104.7 L720.5,1103.6 L722.8,1105.9 L727.5,1099.7 L729.8,1100.5 L732.9,1097.8 L736.8,1101.2 L742.2,1102.8 L746.9,1105.1 L750.0,1107.1 L754.7,1100.9 L762.4,1096.6 L767.1,1095.0 L771.7,1084.9 L775.6,1084.9 L779.5,1082.6 L783.4,1087.3 L785.7,1084.9 L790.4,1082.6 L796.6,1083.9 L799.7,1079.5 L802.8,1072.5 L804.3,1073.0 L806.7,1080.3 L812.1,1083.4 L815.2,1078.0 L819.9,1082.3 L823.0,1091.1 L824.5,1085.7 L827.6,1088.8 L831.5,1090.1 L835.4,1081.8 L841.6,1078.0 L847.8,1078.0 L850.9,1074.1 L854.8,1073.3 L858.7,1070.2 L862.6,1068.3 L864.9,1071.7 L867.2,1065.5 L870.3,1063.2 L872.7,1063.7 L875.8,1059.0 L878.9,1061.2 L883.5,1061.6 L887.4,1071.0 L889.8,1065.5 L892.1,1070.2 L894.4,1064.8 L896.7,1068.6 L900.0,1062.4 L901.6,1060.1 L905.9,1070.2 L907.8,1065.5 L917.1,1077.2 L919.4,1073.3 L923.3,1071.7 L928.0,1069.4 L931.1,1070.5 L933.4,1078.0 L938.8,1074.1 L941.1,1075.6 L945.8,1086.5 L949.7,1081.8 L955.9,1085.7 L959.0,1094.3 L965.2,1096.6 L969.1,1093.2 L973.0,1091.6 L975.3,1087.6 L980.0,1085.4 L984.6,1088.5 L988.5,1085.7 L993.2,1093.5 L997.8,1093.8 L1003.3,1088.5 L1005.6,1088.8 L1008.7,1094.3 L1014.1,1094.3 L1018.8,1094.3 L1024.2,1088.5 L1026.6,1089.6 L1033.5,1084.9 L1036.6,1081.8 L1042.1,1079.2 L1046.7,1083.4 L1049.1,1083.4 L1051.4,1087.6 L1053.7,1085.7 L1059.9,1086.5 L1064.6,1088.5 L1067.7,1087.6 L1070.8,1090.1 L1077.0,1090.7 L1081.7,1093.5 L1084.8,1100.5 L1088.7,1103.6 L1091.0,1101.2 L1096.4,1103.1 L1101.9,1104.0 L1105.0,1107.8 L1109.6,1104.7 L1113.5,1106.7 L1117.4,1106.2 L1120.5,1108.7 L1126.7,1117.5 L1129.8,1119.6 L1132.9,1117.1 L1134.5,1118.3 L1136.8,1116.0 L1145.3,1118.3 L1150.0,1116.5 L1154.7,1116.5 L1157.8,1118.3 L1164.7,1110.2 L1168.6,1110.6 L1171.7,1109.3 L1174.1,1112.1 L1176.4,1107.8 L1179.5,1108.7 L1182.6,1109.3 L1185.7,1107.8 L1189.6,1108.7 L1195.0,1103.6 L1198.9,1105.9 L1202.0,1109.3 L1208.2,1108.2 L1211.3,1111.3 L1223.0,1110.6 L1227.6,1107.1 L1231.5,1109.0 L1236.2,1113.7 L1249.4,1113.7 L1252.5,1114.9 L1255.6,1113.4 L1263.4,1114.4 L1275.8,1114.4 L1279.7,1110.2 L1288.2,1109.8 L1292.1,1109.3 L1295.2,1113.7 L1300.0,1115.5 L1307.8,1117.5 L1315.5,1116.5 L1317.1,1117.1 L1320.2,1114.4 L1335.7,1114.4 L1338.8,1116.8 L1343.5,1116.0 L1355.9,1116.5 L1363.7,1114.9 L1373.0,1110.6 L1379.2,1109.3 L1390.1,1109.0 L1394.7,1108.7 L1400.2,1109.0 L1404.0,1111.3 L1411.8,1108.2 L1418.0,1109.3 L1425.8,1109.0 L1432.0,1110.6 L1435.1,1112.4 L1439.8,1108.2 L1446.0,1107.5 L1464.6,1105.1 L1470.8,1105.1 L1477.0,1101.6 L1483.2,1105.6 L1492.5,1104.7 L1494.9,1106.2 L1499.5,1103.6 L1505.0,1106.2 L1520.5,1105.9 L1523.6,1106.7 L1528.3,1105.1 L1532.9,1104.7 L1537.6,1105.1 L1545.3,1108.7 L1551.6,1107.5 L1555.4,1105.1 L1562.4,1106.2 L1565.5,1104.3 L1570.2,1104.3 L1573.3,1105.6 L1581.1,1104.3 L1602.8,1105.6 L1610.6,1105.1 L1616.8,1106.2 L1621.4,1108.7 L1630.7,1108.7 L1633.9,1107.8 L1637.7,1109.0 L1649.4,1109.8 L1655.6,1109.0 L1663.4,1110.2 L1671.1,1108.2 L1678.9,1108.7 L1683.5,1110.6 L1689.8,1109.8 L1694.4,1109.0 L1700.0,1106.7 L1707.8,1105.6 L1714.8,1104.7 L1717.1,1101.2 L1724.1,1102.8 L1727.2,1104.0 L1730.3,1103.6 L1734.9,1102.0 L1741.9,1102.8 L1749.7,1097.4 L1753.6,1099.4 L1762.1,1100.5 L1768.3,1098.4 L1773.0,1097.4 L1776.1,1098.4 L1779.2,1097.8 L1784.6,1099.7 L1789.3,1094.3 L1796.3,1094.7 L1800.9,1096.6 L1804.8,1099.4 L1811.8,1098.4 L1818.8,1098.9 L1824.2,1095.3 L1830.4,1090.4 L1836.6,1087.6 L1840.5,1088.8 L1845.2,1083.4 L1849.8,1080.3 L1855.3,1073.3 L1861.5,1072.0 L1866.1,1079.2 L1870.0,1079.5 L1872.4,1082.3 L1877.0,1078.0 L1883.2,1079.2 L1887.1,1082.6 L1892.5,1079.2 L1894.9,1079.2 L1898.0,1087.6 L1900.3,1086.0 L1902.6,1088.0 L1908.9,1083.4 L1914.3,1083.4 L1918.9,1088.0 L1922.8,1085.4 L1929.8,1088.8 L1939.1,1085.4 L1941.5,1074.1 L1945.3,1075.2 L1948.4,1073.3 L1951.6,1075.6 L1957.8,1074.5 L1964.0,1076.7 L1969.4,1079.5 L1971.7,1077.6 L1975.6,1079.5 L1981.1,1081.8 L1988.8,1080.7 L1991.9,1086.5 L1997.4,1087.3 L2002.0,1085.4 L2005.9,1081.1 L2010.6,1079.2 L2015.2,1082.3 L2024.5,1083.4 L2029.2,1096.6 L2032.3,1098.4 L2034.6,1094.3 L2038.5,1092.2 L2040.8,1094.3 L2050.9,1091.1 L2055.6,1096.3 L2061.8,1094.7 L2067.2,1099.7 L2075.0,1096.3 L2078.9,1098.4 L2083.5,1094.3 L2092.1,1092.2 L2096.0,1095.8 L2100.0,1096.3 L2105.4,1097.4 L2110.9,1093.5 L2117.1,1091.6 L2124.1,1095.8 L2128.7,1093.2 L2134.2,1096.3 L2136.0,1095.8 L2138.8,1088.0 L2143.2,1081.8 L2148.1,1086.5 L2152.0,1086.0 L2154.3,1081.8 L2159.0,1080.7 L2161.3,1077.2 L2168.3,1077.6 L2173.0,1071.7 L2175.3,1076.4 L2182.3,1072.5 L2184.6,1073.6 L2187.7,1081.8 L2193.9,1079.8 L2197.0,1082.3 L2200.9,1081.8 L2207.1,1076.4 L2210.2,1082.6 L2216.5,1083.9 L2220.3,1082.3 L2228.9,1082.9 L2232.8,1086.0 L2235.1,1083.4 L2239.8,1088.8 L2244.4,1093.5 L2249.1,1093.5 L2255.3,1091.9 L2259.9,1092.7 L2263.0,1090.7 L2267.7,1098.1 L2271.6,1100.9 L2274.7,1099.7 L2283.2,1105.1 L2288.7,1104.3 L2291.0,1102.8 L2298.0,1102.8 L2302.6,1105.9 L2308.9,1106.7 L2313.5,1111.3 L2318.9,1109.0 L2323.6,1110.2 L2328.3,1109.3 L2330.6,1107.5 L2336.0,1106.2 L2346.1,1106.2 L2351.6,1094.7 L2355.4,1093.8 L2361.6,1095.3 L2364.8,1092.7 L2367.1,1095.0 L2371.7,1092.7 L2374.8,1095.0 L2378.0,1094.7 L2381.1,1096.9 L2388.0,1091.1 L2391.1,1094.3 L2397.4,1095.3 L2399.7,1098.1 L2409.0,1095.8 L2411.3,1097.4 L2414.4,1094.3 L2417.5,1095.3 L2423.0,1088.5 L2426.9,1086.0 L2430.7,1078.7 L2435.4,1075.2 L2437.7,1077.6 L2441.6,1073.6 L2445.5,1076.4 L2448.6,1081.1 L2450.2,1077.6 L2453.3,1076.4 L2459.5,1062.1 L2467.2,1066.8 L2471.9,1058.5 L2475.8,1060.9 L2480.4,1065.5 L2485.1,1064.8 L2488.2,1066.8 L2492.1,1066.3 L2496.7,1061.2 L2500.0,1063.2 L2502.0,1062.4 L2506.0,1064.3 L2510.6,1073.7 L2520.6,1063.2 L2526.3,1065.1 L2529.6,1076.5 L2531.2,1067.6 L2536.0,1074.1 L2538.5,1071.6 L2541.7,1074.1 L2547.4,1069.5 L2551.5,1073.7 L2554.7,1073.3 L2557.1,1081.4 L2563.6,1078.5 L2570.1,1084.6 L2577.4,1091.6 L2580.7,1087.9 L2588.8,1087.4 L2593.7,1085.1 L2598.5,1082.2 L2601.8,1086.2 L2608.3,1090.3 L2610.7,1087.9 L2621.2,1087.9 L2628.5,1083.0 L2631.0,1086.2 L2635.0,1086.2 L2638.3,1081.9 L2642.3,1082.5 L2645.6,1088.4 L2653.7,1087.9 L2659.4,1099.2" fill="none" stroke="#7d96d8" stroke-width="1.3" clip-path="url(#selclip)"/><rect x="2544.4" y="1080.4" width="30.4" height="36" rx="13" fill="#000" opacity="0.6" filter="url(#hs)"/><rect x="2545.4" y="1081.4" width="28.4" height="34" rx="12" fill="#33353f"/><rect x="2555.0" y="1092.7" width="2.6" height="12" fill="#a9abb3"/><rect x="2561.6" y="1092.7" width="2.6" height="12" fill="#a9abb3"/><rect x="2658.8" y="1080.4" width="30.4" height="36" rx="13" fill="#000" opacity="0.6" filter="url(#hs)"/><rect x="2659.8" y="1081.4" width="28.4" height="34" rx="12" fill="#33353f"/><rect x="2669.4" y="1092.7" width="2.6" height="12" fill="#a9abb3"/><rect x="2676.0" y="1092.7" width="2.6" height="12" fill="#a9abb3"/></svg>
</body></html>
